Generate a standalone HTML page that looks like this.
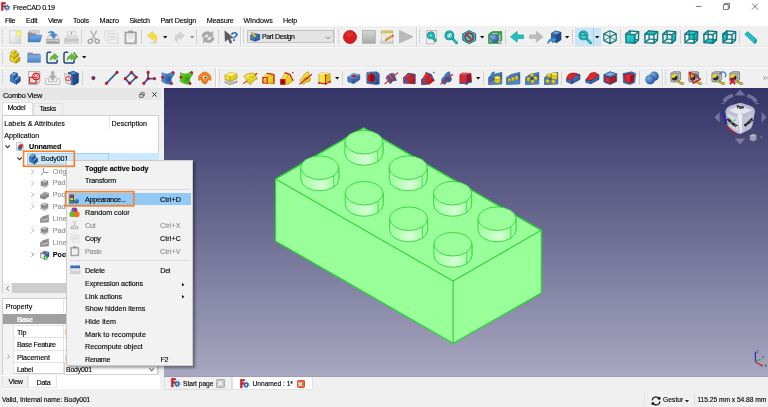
<!DOCTYPE html><html><head><meta charset="utf-8"><title>FreeCAD 0.19</title><style>
*{margin:0;padding:0;box-sizing:border-box}
html,body{width:768px;height:407px;overflow:hidden;background:#f0f0f0}
body{position:relative;will-change:transform;font-family:"Liberation Sans",sans-serif;font-size:7px;color:#000;line-height:1}
.a{position:absolute}
.t{position:absolute;white-space:nowrap;line-height:10px;height:10px;-webkit-text-stroke:.12px currentColor}
.g{color:#8e8e8e}
.b{font-weight:bold}
svg{position:absolute;overflow:visible}
</style></head><body>
<div class="a" style="left:0px;top:0px;width:768px;height:26px;background:#fff"></div>
<svg style="left:1.1px;top:2.4px" width="9.0" height="9.0" viewBox="0 0 9 9"><path d="M.3 .3H4.5V2H2.1V3.4H3.8V5H2.1V8.5H.3Z" fill="#d3222a" stroke="#8a1218" stroke-width=".35"/><circle cx="5.9" cy="5.6" r="2.1" fill="#3a6fb5" stroke="#1c3c70" stroke-width=".4"/><circle cx="5.9" cy="5.6" r="2.7" fill="none" stroke="#2a5596" stroke-width=".9" stroke-dasharray="1 1.12"/><circle cx="5.9" cy="5.6" r=".85" fill="#fff"/></svg>
<div class="t " style="left:12.9px;top:2.90px;font-size:7.2px;letter-spacing:-0.338px;">FreeCAD 0.19</div>
<div class="t " style="left:5px;top:15.80px;font-size:7.2px;letter-spacing:-0.334px;">File</div>
<div class="t " style="left:26px;top:15.80px;font-size:7.2px;letter-spacing:-0.302px;">Edit</div>
<div class="t " style="left:48px;top:15.80px;font-size:7.2px;letter-spacing:-0.325px;">View</div>
<div class="t " style="left:73px;top:15.80px;font-size:7.2px;letter-spacing:-0.202px;">Tools</div>
<div class="t " style="left:99.6px;top:15.80px;font-size:7.2px;letter-spacing:-0.151px;">Macro</div>
<div class="t " style="left:129.6px;top:15.80px;font-size:7.2px;letter-spacing:-0.322px;">Sketch</div>
<div class="t " style="left:160.4px;top:15.80px;font-size:7.2px;letter-spacing:-0.172px;">Part Design</div>
<div class="t " style="left:206.7px;top:15.80px;font-size:7.2px;letter-spacing:-0.152px;">Measure</div>
<div class="t " style="left:243.5px;top:15.80px;font-size:7.2px;letter-spacing:0.049px;">Windows</div>
<div class="t " style="left:283px;top:15.80px;font-size:7.2px;letter-spacing:-0.169px;">Help</div>
<svg style="left:0;top:0" width="768" height="14" viewBox="0 0 768 14"><path d="M695.8 6.4h6" stroke="#444" stroke-width=".7"/><path d="M723.5 4.6h4.8v4.9h-4.8z M724.7 4.6v-1.2h4.8v4.9h-1.2" fill="none" stroke="#444" stroke-width=".7"/><path d="M752 3.4l6 6.2M758 3.4l-6 6.2" stroke="#444" stroke-width=".7"/></svg>
<div class="a" style="left:0px;top:26px;width:768px;height:62px;background:#f0f0f0"></div>
<div class="a" style="left:0px;top:45.6px;width:768px;height:1px;background:#e5e5e5"></div>
<div class="a" style="left:0px;top:46.6px;width:768px;height:0.8px;background:#fcfcfc"></div>
<div class="a" style="left:0px;top:66.2px;width:768px;height:1px;background:#e5e5e5"></div>
<div class="a" style="left:0px;top:67.2px;width:768px;height:0.8px;background:#fcfcfc"></div>
<div class="t " style="left:2px;top:395.40px;font-size:6.7px;letter-spacing:-0.027px;">Valid, Internal name: Body001</div>
<div class="t " style="left:663px;top:395.40px;font-size:6.7px;letter-spacing:0.039px;">Gestur</div>
<div class="t " style="left:697.4px;top:395.40px;font-size:6.7px;letter-spacing:-0.041px;">115.25 mm x 54.88 mm</div>
<div class="a" style="left:694px;top:393px;width:1px;height:14px;background:#dcdcdc"></div>
<div class="a" style="left:644px;top:393px;width:1px;height:14px;background:#e4e4e4"></div>
<svg style="left:650px;top:395px" width="12" height="12" viewBox="0 0 12 12"><path d="M2.2 5.2A3.6 3.6 0 0 1 8.6 3.2" fill="none" stroke="#222" stroke-width="1.3"/><path d="M9.8 6.4A3.6 3.6 0 0 1 3.4 8.6" fill="none" stroke="#222" stroke-width="1.3"/><circle cx="9.1" cy="3.3" r="1.5" fill="#222"/><circle cx="2.9" cy="8.6" r="1.5" fill="#222"/></svg>
<svg style="left:685px;top:399.5px" width="4" height="3" viewBox="0 0 4 3"><path d="M0 0h4l-2 2.4z" fill="#222"/></svg>
<div class="a" style="left:164px;top:376.6px;width:604px;height:14px;background:#f0f0f0"></div>
<div class="a" style="left:164.3px;top:376.6px;width:67.4px;height:13.4px;background:#f0f0f0;border:1px solid #dedede;border-top:none"></div>
<div class="a" style="left:232px;top:376.3px;width:81.4px;height:14px;background:#fff;border:1px solid #e3e3e3;border-top:none"></div>
<svg style="left:170.8px;top:378.4px" width="9.450000000000001" height="9.450000000000001" viewBox="0 0 9 9"><path d="M.3 .3H4.5V2H2.1V3.4H3.8V5H2.1V8.5H.3Z" fill="#d3222a" stroke="#8a1218" stroke-width=".35"/><circle cx="5.9" cy="5.6" r="2.1" fill="#3a6fb5" stroke="#1c3c70" stroke-width=".4"/><circle cx="5.9" cy="5.6" r="2.7" fill="none" stroke="#2a5596" stroke-width=".9" stroke-dasharray="1 1.12"/><circle cx="5.9" cy="5.6" r=".85" fill="#fff"/></svg>
<div class="t " style="left:183px;top:379.10px;font-size:6.7px;letter-spacing:-0.046px;">Start page</div>
<div class="a" style="left:216.3px;top:379px;width:8.3px;height:8.5px;background:#c9c9c9;border:1px solid #b0b0b0;border-radius:1px"></div>
<svg style="left:218.3px;top:381.1px" width="4.4" height="4.4" viewBox="0 0 4 4"><path d="M.3 .3l3.4 3.4M3.7 .3L.3 3.7" stroke="#fff" stroke-width="1"/></svg>
<svg style="left:240px;top:378.8px" width="9.450000000000001" height="9.450000000000001" viewBox="0 0 9 9"><path d="M.3 .3H4.5V2H2.1V3.4H3.8V5H2.1V8.5H.3Z" fill="#d3222a" stroke="#8a1218" stroke-width=".35"/><circle cx="5.9" cy="5.6" r="2.1" fill="#3a6fb5" stroke="#1c3c70" stroke-width=".4"/><circle cx="5.9" cy="5.6" r="2.7" fill="none" stroke="#2a5596" stroke-width=".9" stroke-dasharray="1 1.12"/><circle cx="5.9" cy="5.6" r=".85" fill="#fff"/></svg>
<div class="t " style="left:252.5px;top:379.10px;font-size:6.7px;letter-spacing:-0.042px;">Unnamed : 1*</div>
<div class="a" style="left:296.5px;top:379.5px;width:8.2px;height:8.3px;background:#e66a48;border:1px solid #d4512f;border-radius:1.2px"></div>
<svg style="left:298.4px;top:381.5px" width="4.4" height="4.4" viewBox="0 0 4 4"><path d="M.3 .3l3.4 3.4M3.7 .3L.3 3.7" stroke="#fff" stroke-width="1.1"/></svg>
<div class="a" style="left:164px;top:88px;width:604px;height:288.6px;background:linear-gradient(#333366 0%,#a8a8c1 100%)"></div>
<div class="a" style="left:164px;top:375.8px;width:604px;height:0.8px;background:#9c9cb2"></div>
<svg style="left:0;top:0" width="768" height="407" viewBox="0 0 768 407"><defs><linearGradient id="sd" x1="0" x2="1" y1="0" y2="0"><stop offset="0" stop-color="#9eff9e"/><stop offset=".28" stop-color="#b8ffb8"/><stop offset=".55" stop-color="#d4ffd4"/><stop offset=".8" stop-color="#b0ffb0"/><stop offset="1" stop-color="#99ff99"/></linearGradient></defs><polygon points="363.7,128.0 541.2,230.3 541.2,293.1 453.1,343.3 275.6,241.0 275.6,179.0" fill="#99ff99" stroke="#33d23b" stroke-width="1.15" stroke-linejoin="round"/><polygon points="275.6,179.0 453.1,281.0 453.1,343.3 275.6,241.0" fill="#99ff99" stroke="none"/><polygon points="453.1,281.0 541.2,230.3 541.2,293.1 453.1,343.3" fill="#99ff99" stroke="none"/><path d="M275.6,179.0 L453.1,281.0 L541.2,230.3 M453.1,281.0 L453.1,343.3 M275.6,179.0 L275.6,241.0 L453.1,343.3 L541.2,293.1 L541.2,230.3 L363.7,128.0 L275.6,179.0" fill="none" stroke="#33d23b" stroke-width="1.15" stroke-linejoin="round"/><path d="M344.9,142.2 L344.9,153.5 A19.0,11.8 0 0 0 382.9,153.5 L382.9,142.2 Z" fill="url(#sd)" stroke="#33d23b" stroke-width=".9"/><path d="M377.7,150.3 L377.7,161.6 A19.0,11.8 0 0 0 382.9,153.5 L382.9,142.2 Z" fill="#9bff9b" stroke="#33d23b" stroke-width=".8"/><ellipse cx="363.9" cy="142.2" rx="19.0" ry="11.8" fill="#9aff9a" stroke="#33d23b" stroke-width=".9"/><path d="M300.8,167.7 L300.8,179.0 A19.0,11.8 0 0 0 338.8,179.0 L338.8,167.7 Z" fill="url(#sd)" stroke="#33d23b" stroke-width=".9"/><path d="M333.6,175.8 L333.6,187.1 A19.0,11.8 0 0 0 338.8,179.0 L338.8,167.7 Z" fill="#9bff9b" stroke="#33d23b" stroke-width=".8"/><ellipse cx="319.8" cy="167.7" rx="19.0" ry="11.8" fill="#9aff9a" stroke="#33d23b" stroke-width=".9"/><path d="M389.2,167.7 L389.2,179.0 A19.0,11.8 0 0 0 427.2,179.0 L427.2,167.7 Z" fill="url(#sd)" stroke="#33d23b" stroke-width=".9"/><path d="M422.0,175.8 L422.0,187.1 A19.0,11.8 0 0 0 427.2,179.0 L427.2,167.7 Z" fill="#9bff9b" stroke="#33d23b" stroke-width=".8"/><ellipse cx="408.2" cy="167.7" rx="19.0" ry="11.8" fill="#9aff9a" stroke="#33d23b" stroke-width=".9"/><path d="M345.2,193.2 L345.2,204.5 A19.0,11.8 0 0 0 383.2,204.5 L383.2,193.2 Z" fill="url(#sd)" stroke="#33d23b" stroke-width=".9"/><path d="M378.0,201.3 L378.0,212.6 A19.0,11.8 0 0 0 383.2,204.5 L383.2,193.2 Z" fill="#9bff9b" stroke="#33d23b" stroke-width=".8"/><ellipse cx="364.2" cy="193.2" rx="19.0" ry="11.8" fill="#9aff9a" stroke="#33d23b" stroke-width=".9"/><path d="M433.6,193.2 L433.6,204.5 A19.0,11.8 0 0 0 471.6,204.5 L471.6,193.2 Z" fill="url(#sd)" stroke="#33d23b" stroke-width=".9"/><path d="M466.4,201.3 L466.4,212.6 A19.0,11.8 0 0 0 471.6,204.5 L471.6,193.2 Z" fill="#9bff9b" stroke="#33d23b" stroke-width=".8"/><ellipse cx="452.6" cy="193.2" rx="19.0" ry="11.8" fill="#9aff9a" stroke="#33d23b" stroke-width=".9"/><path d="M389.6,218.7 L389.6,230.0 A19.0,11.8 0 0 0 427.6,230.0 L427.6,218.7 Z" fill="url(#sd)" stroke="#33d23b" stroke-width=".9"/><path d="M422.4,226.8 L422.4,238.1 A19.0,11.8 0 0 0 427.6,230.0 L427.6,218.7 Z" fill="#9bff9b" stroke="#33d23b" stroke-width=".8"/><ellipse cx="408.6" cy="218.7" rx="19.0" ry="11.8" fill="#9aff9a" stroke="#33d23b" stroke-width=".9"/><path d="M478.0,218.7 L478.0,230.0 A19.0,11.8 0 0 0 516.0,230.0 L516.0,218.7 Z" fill="url(#sd)" stroke="#33d23b" stroke-width=".9"/><path d="M510.8,226.8 L510.8,238.1 A19.0,11.8 0 0 0 516.0,230.0 L516.0,218.7 Z" fill="#9bff9b" stroke="#33d23b" stroke-width=".8"/><ellipse cx="497.0" cy="218.7" rx="19.0" ry="11.8" fill="#9aff9a" stroke="#33d23b" stroke-width=".9"/><path d="M433.9,244.2 L433.9,255.5 A19.0,11.8 0 0 0 471.9,255.5 L471.9,244.2 Z" fill="url(#sd)" stroke="#33d23b" stroke-width=".9"/><path d="M466.7,252.3 L466.7,263.6 A19.0,11.8 0 0 0 471.9,255.5 L471.9,244.2 Z" fill="#9bff9b" stroke="#33d23b" stroke-width=".8"/><ellipse cx="452.9" cy="244.2" rx="19.0" ry="11.8" fill="#9aff9a" stroke="#33d23b" stroke-width=".9"/></svg>
<svg style="left:700px;top:86px" width="68" height="62" viewBox="700 86 68 62"><path d="M740 89.6L745.4 95.6H734.6Z" fill="#b9b9d6" fill-opacity=".45"/><path d="M740 144.4L745.2 138.6H734.8Z" fill="#b9b9d6" fill-opacity=".45"/><path d="M714.4 117.2L719.6 112V122.4Z" fill="#b9b9d6" fill-opacity=".45"/><path d="M766.6 117.2L761.6 112V122.4Z" fill="#b9b9d6" fill-opacity=".45"/><path d="M720.4 103.4L724.6 104.4L722.8 99.8C725 96.8 728.6 94.6 732.6 93.8L733.6 96.8C730 97.8 727.4 99.6 725.6 102.4Z" fill="#b9b9d6" fill-opacity=".45"/><path d="M760 103.6L755.4 104.4L757.4 100C755.2 97 751.6 94.8 747.6 94L746.8 97C750.2 98 752.8 99.8 754.6 102.6Z" fill="#b9b9d6" fill-opacity=".45"/><path d="M725.4 111.6C725.6 108.6 728 106.6 731 105.6L738 103.2C739.4 102.8 741 102.8 742.4 103.2L750 105.8C753 106.8 755 108.8 755 111.6L752.6 124.6C752.2 127 750.8 128.8 748.6 130L741.6 133.6C740.4 134.2 739.2 134.2 738 133.6L731.6 130C729.4 128.8 728 127 727.6 124.8Z" fill="#c9c9de" fill-opacity=".9"/><path d="M728.6 110.2L739.4 105.2L752.2 110.2L740 115.6Z" fill="#e4e4f0"/><path d="M727.4 113L738 118V131.2L730 126.2Z" fill="#d5d5e6"/><path d="M742 118L753 113L750.6 126.2L742 131.2Z" fill="#c2c2d8"/><path d="M738 118L740 115.6L742 118V131.6L740 133Z" fill="#e9e9f4"/><circle cx="740" cy="116.6" r="2.4" fill="#ececf6"/><path d="M740 106V116" stroke="#efeff8" stroke-width="1"/><text x="740.1" y="108.6" font-family="Liberation Sans,sans-serif" font-weight="bold" font-size="3.5" text-anchor="middle" fill="#000" stroke="#000" stroke-width=".3" transform="rotate(8 740.1 107.4)">TOP</text><text x="732" y="124.1" font-family="Liberation Sans,sans-serif" font-weight="bold" font-size="3.5" text-anchor="middle" fill="#000" stroke="#000" stroke-width=".3" transform="rotate(40 732 122.9)">FRONT</text><text x="748.7" y="123.6" font-family="Liberation Sans,sans-serif" font-weight="bold" font-size="3.5" text-anchor="middle" fill="#000" stroke="#000" stroke-width=".3" transform="rotate(-40 748.7 122.4)">RIGHT</text><path d="M726.2 125.2L722.4 112" stroke="#1d1dd8" stroke-width="1.1"/><path d="M726.2 125.2L735.4 134" stroke="#c61a2a" stroke-width="1.1"/><path d="M726.2 125.2L736 119.6" stroke="#35d046" stroke-width=".8"/><text x="721.4" y="107.4" font-family="Liberation Sans,sans-serif" font-size="4" fill="#2222e0">Z</text><text x="741" y="139.4" font-family="Liberation Sans,sans-serif" font-size="4" fill="#c61a2a">X</text><text x="741.6" y="116.4" font-family="Liberation Sans,sans-serif" font-size="3.2" fill="#5ae86a">Y</text><path d="M749.8 135.4L752.6 134.2L756.4 135V139.8L753.4 141.2L749.8 140Z" fill="#9d9db4" stroke="#8888a2" stroke-width=".3"/><path d="M749.8 135.4L752.6 134.2L756.4 135L753.4 136.4Z" fill="#b9b9cc"/><path d="M759.4 136.6H763L761.2 138.6Z" fill="#77778f"/></svg>
<svg style="left:745px;top:345px" width="23" height="30" viewBox="745 345 23 30"><path d="M755.4 362V353" stroke="#2a2ac8" stroke-width="1.1"/><path d="M755.4 350.8L756.3 354H754.5Z" fill="#2a2ac8"/><path d="M755.4 362L760 359.4" stroke="#2aa62a" stroke-width="1"/><path d="M761.4 358.6L759.4 360.6L758.8 359.2Z" fill="#2aa62a"/><path d="M755.4 362L762 365.6" stroke="#b8222a" stroke-width="1.1"/><path d="M763.6 366.6L760.8 366.2L761.6 364.6Z" fill="#b8222a"/><text x="756.4" y="353" font-family="Liberation Sans,sans-serif" font-size="3.8" fill="#333">Z</text><text x="762" y="359" font-family="Liberation Sans,sans-serif" font-size="3.8" fill="#333">Y</text><text x="764.4" y="367.4" font-family="Liberation Sans,sans-serif" font-size="3.8" fill="#333">X</text></svg>
<svg width="0" height="0" style="left:0;top:0"><defs><linearGradient id="gpg" x1="0" y1="0" x2="1" y2="1"><stop offset="0" stop-color="#fbfbfb"/><stop offset="1" stop-color="#d4d4d4"/></linearGradient><linearGradient id="gbl" x1="0" y1="0" x2="0" y2="1"><stop offset="0" stop-color="#6aa2de"/><stop offset="1" stop-color="#3a74bd"/></linearGradient><linearGradient id="gbl3" x1="0" y1="0" x2="0" y2="1"><stop offset="0" stop-color="#86b4ea"/><stop offset="1" stop-color="#4c82c8"/></linearGradient><linearGradient id="gbl4" x1="0" y1="0" x2="0" y2="1"><stop offset="0" stop-color="#79ade8"/><stop offset="1" stop-color="#3f7dcc"/></linearGradient><linearGradient id="gbl2" x1="0" y1="0" x2="1" y2="1"><stop offset="0" stop-color="#5d97d6"/><stop offset="1" stop-color="#1f4f92"/></linearGradient><linearGradient id="gye" x1="0" y1="0" x2="1" y2="1"><stop offset="0" stop-color="#fff25a"/><stop offset="1" stop-color="#d8b90a"/></linearGradient><linearGradient id="grd" x1="0" y1="0" x2="1" y2="1"><stop offset="0" stop-color="#f03a3a"/><stop offset="1" stop-color="#b80c0c"/></linearGradient><linearGradient id="ggy" x1="0" y1="0" x2="0" y2="1"><stop offset="0" stop-color="#d6d6d6"/><stop offset="1" stop-color="#a9a9a9"/></linearGradient><linearGradient id="gtl" x1="0" y1="0" x2="1" y2="1"><stop offset="0" stop-color="#35dcdc"/><stop offset="1" stop-color="#12a7ad"/></linearGradient><radialGradient id="gyl"><stop offset="0" stop-color="#fffef0"/><stop offset=".5" stop-color="#f6ee5a"/><stop offset="1" stop-color="#f0e85a" stop-opacity=".0"/></radialGradient><radialGradient id="gsp" cx=".35" cy=".35" r=".7"><stop offset="0" stop-color="#7fb0e6"/><stop offset="1" stop-color="#1f4f9a"/></radialGradient></defs></svg>
<svg style="left:2.0px;top:29px" width="1" height="15" viewBox="0 0 1 15"><path d="M.5 0V15" stroke="#b9b9b9" stroke-width="1" stroke-dasharray="1 1.2"/></svg>
<svg style="left:9px;top:30px" width="14" height="14" viewBox="0 0 14 14"><path d="M.8 .8H11.6V13.2H.8Z" fill="url(#gpg)" stroke="#c2c2c2" stroke-width=".7"/><circle cx="10" cy="3.4" r="3.6" fill="url(#gyl)"/><circle cx="10" cy="3.4" r="1.9" fill="#f7f06a"/><circle cx="10" cy="3.4" r=".9" fill="#fffbd0"/></svg>
<svg style="left:26.5px;top:30px" width="16" height="13" viewBox="0 0 16 13"><path d="M1.6 1.4H9.4V10H1.6Z" fill="#8f8f8f"/><path d="M2.8 .6H12V9H2.8Z" fill="#dcdcdc" stroke="#a2a2a2" stroke-width=".5"/><path d="M4 2.4H10.6M4 3.8H10.6" stroke="#bdbdbd" stroke-width=".5"/><path d="M.8 2.6H4.6L5.6 3.6H9V11.5H.8Z" fill="#8a8e94"/><path d="M3.2 5.2H15L13 11.9H1Z" fill="url(#gbl4)" stroke="#3d74bb" stroke-width=".5"/></svg>
<svg style="left:45.5px;top:30px" width="14" height="14" viewBox="0 0 14 14"><path d="M2.6 5.2H11.2L13.3 9.4H.5Z" fill="#e6e6e6" stroke="#a6a6a6" stroke-width=".5"/><path d="M.5 9.4H13.3V13.5H.5Z" fill="url(#ggy)" stroke="#8f8f8f" stroke-width=".5"/><path d="M1.4 12H12.4" stroke="#7d7d7d" stroke-width=".7"/><path d="M10 10.6H11.6" stroke="#e8e8e8" stroke-width=".7"/><path d="M2 2.8C3.8 .4 8.4 .4 9 4.4L10.9 4.4L7.6 8.8L4.2 4.4L6.1 4.4C5.8 2.6 3.8 2.2 2 2.8Z" fill="#4a8fdc" stroke="#2a66ae" stroke-width=".45"/></svg>
<svg style="left:63.5px;top:30px" width="15" height="14" viewBox="0 0 15 14"><path d="M3.6 1.4H11.4V6.4H3.6Z" fill="#f4f4f4" stroke="#bdbdbd" stroke-width=".6"/><path d="M7.5 2.2V5M6.1 3.6L7.5 2.2L8.9 3.6" stroke="#ababab" stroke-width=".9" fill="none"/><path d="M2.4 6H12.6L14.3 9.2H.7Z" fill="#e2e2e2" stroke="#b5b5b5" stroke-width=".5"/><path d="M.7 9.2H14.3V13.2H.7Z" fill="#d2d2d2" stroke="#b0b0b0" stroke-width=".5"/><path d="M1.6 11.2H13.4" stroke="#a9a9a9" stroke-width=".7"/><path d="M1.6 12.2H13.4" stroke="#f4f4f4" stroke-width=".6"/></svg>
<div class="a" style="left:81.0px;top:30px;width:1px;height:14px;background:#cfcfcf"></div>
<svg style="left:87px;top:30px" width="13.5" height="14.5" viewBox="0 0 13.5 14.5"><path d="M3.6 .6L8.6 9.6M9.8 .6L4.8 9.6" stroke="#b9b9b9" stroke-width="1.5" fill="none"/><ellipse cx="3.3" cy="11.3" rx="2.3" ry="1.9" transform="rotate(-35 3.3 11.3)" fill="none" stroke="#9c9c9c" stroke-width="1.2"/><ellipse cx="10.1" cy="11.3" rx="2.3" ry="1.9" transform="rotate(35 10.1 11.3)" fill="none" stroke="#9c9c9c" stroke-width="1.2"/></svg>
<svg style="left:104px;top:30px" width="15" height="14.5" viewBox="0 0 15 14.5"><path d="M.8 .8H9.2V10.4H.8Z" fill="#ececec" stroke="#d3d3d3" stroke-width=".6"/><path d="M4.6 3.6H14V13.6H4.6Z" fill="#eeeeee" stroke="#cfcfcf" stroke-width=".6"/><path d="M6.4 6.2H12M6.4 7.8H12M6.4 9.4H10.5" stroke="#d2d2d2" stroke-width=".8"/><path d="M11.4 13.6L14 11V13.6Z" fill="#d0d0d0"/></svg>
<svg style="left:124px;top:29.6px" width="13.5" height="14.5" viewBox="0 0 13.5 14.5"><path d="M.9 2H12.4V13.8H.9Z" fill="#a9a9a9" stroke="#979797" stroke-width=".6"/><path d="M2.4 3.4H10.9V12.4H2.4Z" fill="#f0f0f0"/><path d="M4.2 .7H9.1V3H4.2Z" fill="#9a9a9a"/><path d="M4 5.4H9.4M4 7H9.4M4 8.6H8" stroke="#d6d6d6" stroke-width=".7"/><path d="M8.6 12.4L10.9 10.2V12.4Z" fill="#c4c4c4"/></svg>
<div class="a" style="left:140.8px;top:30px;width:1px;height:14px;background:#cfcfcf"></div>
<svg style="left:146.5px;top:30.5px" width="12" height="13" viewBox="0 0 12 13"><ellipse cx="6.8" cy="11.6" rx="3.6" ry=".9" fill="#d2d2d2"/><path d="M.6 4.6L5.6 .6V3C10.6 3 11.6 8.6 7 11.4C8.6 8.6 8 6.4 5.6 6.4V8.8Z" fill="#f5e332" stroke="#d8bb12" stroke-width=".5"/></svg>
<svg style="left:163.4px;top:35.8px" width="4.4" height="2.6" viewBox="0 0 4.4 2.6"><path d="M0 0H4.4L2.2 2.6Z" fill="#111"/></svg>
<svg style="left:173.2px;top:30.5px" width="12" height="13" viewBox="0 0 12 13"><path d="M11.4 4.6L6.4 .6V3C1.4 3 .4 8.6 5 11.4C3.4 8.6 4 6.4 6.4 6.4V8.8Z" fill="#d2d2d2" stroke="#c4c4c4" stroke-width=".5"/></svg>
<svg style="left:189.8px;top:35.8px" width="4.4" height="2.6" viewBox="0 0 4.4 2.6"><path d="M0 0H4.4L2.2 2.6Z" fill="#8c8c8c"/></svg>
<div class="a" style="left:196.0px;top:30px;width:1px;height:14px;background:#cfcfcf"></div>
<svg style="left:201.4px;top:29.8px" width="14" height="14.4" viewBox="0 0 14 14.4"><path d="M.8 6.8C.6 2.2 6.6 -.2 10 3L11.8 1.2V6.8H6.2L8 5C6.4 3.4 3.8 4.2 3.6 6.8Z" fill="#a9a9a9" stroke="#989898" stroke-width=".3"/><path d="M13.2 7.6C13.4 12.2 7.4 14.6 4 11.4L2.2 13.2V7.6H7.8L6 9.4C7.6 11 10.2 10.2 10.4 7.6Z" fill="#a9a9a9" stroke="#989898" stroke-width=".3"/></svg>
<div class="a" style="left:218.0px;top:30px;width:1px;height:14px;background:#cfcfcf"></div>
<svg style="left:223.5px;top:30px" width="14" height="14" viewBox="0 0 14 14"><path d="M.8 .8L1.2 11.6L4 9L6.2 13.4L8 12.5L5.9 8.2L9.6 8Z" fill="#5a5d5f" stroke="#3e4143" stroke-width=".4"/><text x="6.2" y="10.6" font-family="Liberation Sans,sans-serif" font-weight="bold" font-size="13.5" fill="#2f6cc0">?</text></svg>
<div class="a" style="left:239.5px;top:27px;width:1px;height:19px;background:#d4d4d4"></div>
<div class="a" style="left:240.5px;top:27px;width:1px;height:19px;background:#fbfbfb"></div>
<svg style="left:243.0px;top:29px" width="1" height="15" viewBox="0 0 1 15"><path d="M.5 0V15" stroke="#b9b9b9" stroke-width="1" stroke-dasharray="1 1.2"/></svg>
<div class="a" style="left:247px;top:30.4px;width:86.6px;height:12.6px;background:#e4e4e4;border:1px solid #c2c2c2"></div>
<svg style="left:250px;top:32px" width="10.5" height="9.5" viewBox="0 0 10.5 9.5"><path d="M.5 3.2L4.4 1.6L9.8 2.6V7.6L5.4 9.2L.5 7.8Z" fill="url(#gbl2)" stroke="#143a72" stroke-width=".5"/><path d="M.5 3.2L5.4 4.4L9.8 2.6M5.4 4.4V9.2" stroke="#143a72" stroke-width=".4" fill="none"/><path d="M1.2 .4L2.6 0L6.2 4.2L5.4 5.2L4 5Z" fill="#f1d63a" stroke="#8a6d10" stroke-width=".4"/></svg>
<div class="t " style="left:262px;top:32.00px;font-size:7.0px;letter-spacing:-0.357px;">Part Design</div>
<svg style="left:325px;top:35.6px" width="6" height="4" viewBox="0 0 6 4"><path d="M.6 .6L3 3L5.4 .6" fill="none" stroke="#666" stroke-width=".7"/></svg>
<div class="a" style="left:334.0px;top:27px;width:1px;height:19px;background:#d4d4d4"></div>
<div class="a" style="left:335.0px;top:27px;width:1px;height:19px;background:#fbfbfb"></div>
<svg style="left:337.5px;top:29px" width="1" height="15" viewBox="0 0 1 15"><path d="M.5 0V15" stroke="#b9b9b9" stroke-width="1" stroke-dasharray="1 1.2"/></svg>
<svg style="left:343px;top:30px" width="14" height="14" viewBox="0 0 14 14"><circle cx="7" cy="7" r="6.5" fill="#d91c1c" stroke="#a30f0f" stroke-width=".7"/><ellipse cx="6" cy="4.6" rx="3.6" ry="2.4" fill="#e94040" opacity=".55"/></svg>
<svg style="left:362px;top:30.2px" width="14" height="14" viewBox="0 0 14 14"><path d="M.5 .5H13.3V13.3H.5Z" fill="url(#ggy)" stroke="#a2a2a2" stroke-width=".7"/></svg>
<svg style="left:380px;top:30px" width="15" height="14" viewBox="0 0 15 14"><path d="M1.4 1H12.6V12.6H1.4Z" fill="#f3f3f0" stroke="#b4b4ae" stroke-width=".6"/><path d="M.8 11.2H13.2V13.4H.8Z" fill="#d8d8d2" stroke="#aaa" stroke-width=".4"/><path d="M1.4 1H12.6V3H1.4Z" fill="#e5cf5a" stroke="#b99f2d" stroke-width=".5"/><path d="M3 5H8M3 6.6H7M3 8.2H6" stroke="#cfcfcf" stroke-width=".6"/><path d="M5 10.6L6 8.6L12.2 5L13.4 6.6L7.2 10.2Z" fill="#e8a23c" stroke="#9b6414" stroke-width=".4"/><path d="M12.2 5L13 4.5L14.2 6.1L13.4 6.6Z" fill="#e13b2d"/><path d="M5 10.6L5.4 9.8L6 10.3Z" fill="#333"/></svg>
<svg style="left:399px;top:30.3px" width="14.5" height="13.6" viewBox="0 0 14.5 13.6"><path d="M.5 .5L14 6.8L.5 13.1Z" fill="#b9b9b9" stroke="#a8a8a8" stroke-width=".6"/></svg>
<div class="a" style="left:415.5px;top:27px;width:1px;height:19px;background:#d4d4d4"></div>
<div class="a" style="left:416.5px;top:27px;width:1px;height:19px;background:#fbfbfb"></div>
<svg style="left:419.0px;top:29px" width="1" height="15" viewBox="0 0 1 15"><path d="M.5 0V15" stroke="#b9b9b9" stroke-width="1" stroke-dasharray="1 1.2"/></svg>
<svg style="left:426px;top:30px" width="12" height="14.5" viewBox="0 0 12 14.5"><path d="M.6 .6H10.6V11L8 13.8H.6Z" fill="#f2f2f2" stroke="#a9a9a9" stroke-width=".7"/><path d="M8 13.8V11H10.6" fill="#d5d5d5" stroke="#a9a9a9" stroke-width=".5"/><path d="M6.9 7.4L9.2 10.4" stroke="#0b7478" stroke-width="2.6" stroke-linecap="round"/><path d="M6.9 7.4L9.2 10.4" stroke="#22c9cd" stroke-width="1.5" stroke-linecap="round"/><circle cx="4.9" cy="5.4" r="2.9" fill="#4fd6da" stroke="#0b7478" stroke-width="2.1"/><circle cx="4.9" cy="5.4" r="2.9" fill="none" stroke="#1fc3c8" stroke-width="1.2"/></svg>
<svg style="left:443.5px;top:30px" width="14.5" height="14.5" viewBox="0 0 14.5 14.5"><path d="M8.1 8.1L12.6 12.8" stroke="#0b7478" stroke-width="2.6" stroke-linecap="round"/><path d="M8.1 8.1L12.6 12.8" stroke="#22c9cd" stroke-width="1.5" stroke-linecap="round"/><circle cx="5.4" cy="5.4" r="3.9" fill="#4fd6da" stroke="#0b7478" stroke-width="2.1"/><circle cx="5.4" cy="5.4" r="3.9" fill="none" stroke="#1fc3c8" stroke-width="1.2"/><path d="M4 6.8L6.8 4" stroke="#fff" stroke-width="1.2" stroke-linecap="round"/></svg>
<svg style="left:462px;top:30px" width="14.5" height="14.5" viewBox="0 0 14.5 14.5"><path d="M7.2 .6L13.6 3.9V10.3L7.2 13.7L.8 10.3V3.9Z" fill="#22c4c8" stroke="#0b7478" stroke-width="1"/><circle cx="7.2" cy="7.2" r="4" fill="#35d3d6" stroke="#c9161b" stroke-width="1.5"/><path d="M4.5 4.6L9.9 9.8" stroke="#c9161b" stroke-width="1.5"/></svg>
<svg style="left:479.7px;top:35.8px" width="4.4" height="2.6" viewBox="0 0 4.4 2.6"><path d="M0 0H4.4L2.2 2.6Z" fill="#111"/></svg>
<svg style="left:487.6px;top:31px" width="15" height="13.4" viewBox="0 0 15 13.4"><path d="M1 3.6L4.6 .9H13.4V9L9.8 12H1Z" fill="#8d9aa8" fill-opacity=".55" stroke="#178a2a" stroke-width="1.5" stroke-linejoin="round"/><path d="M1 3.6H9.8V12M9.8 3.6L13.4 .9" fill="none" stroke="#178a2a" stroke-width="1.4"/><path d="M1 3.6L4.6 .9H13.4V9L9.8 12H1Z M1 3.6H9.8V12M9.8 3.6L13.4 .9" fill="none" stroke="#3fc14e" stroke-width=".5"/><circle cx="6.4" cy="7.2" r="4.3" fill="url(#gsp)"/><path d="M9.6 7.6L13.8 12.4L12.2 12.2L11.4 13.4Z" fill="#ececec" stroke="#555" stroke-width=".4"/></svg>
<div class="a" style="left:504.9px;top:30px;width:1px;height:14px;background:#cfcfcf"></div>
<svg style="left:510px;top:31px" width="14" height="12" viewBox="0 0 14 12"><path d="M.5 5.8L7.2 .4V4H13.5V7.6H7.2V11.2Z" fill="#1fc1c6" stroke="#0e8b90" stroke-width=".6"/></svg>
<svg style="left:528.5px;top:31px" width="14.5" height="12" viewBox="0 0 14.5 12"><path d="M14 5.8L7.3 .4V4H.6V7.6H7.3V11.2Z" fill="#bdbdbd" stroke="#adadad" stroke-width=".6"/></svg>
<svg style="left:547px;top:30px" width="14.5" height="14.5" viewBox="0 0 14.5 14.5"><path d="M4.4 3.4L8.4 1L13.8 2.4V9.8L9.6 12.6L4.4 11Z" fill="#2f64ac" stroke="#13315f" stroke-width=".6" stroke-linejoin="round"/><path d="M4.4 3.4L8.4 1L13.8 2.4L9.6 5Z" fill="#6da3df" stroke="#13315f" stroke-width=".4"/><path d="M9.6 5L13.8 2.4V9.8L9.6 12.6Z" fill="#1f4c94" stroke="#13315f" stroke-width=".4"/><path d="M.8 13.8C.6 10.6 2.8 8.6 5.6 8.6V6.6L9.4 9.8L5.6 12.8V10.9C3.6 10.8 1.8 11.8 .8 13.8Z" fill="#3fa0d8" stroke="#1b5a94" stroke-width=".5" stroke-linejoin="round"/></svg>
<svg style="left:565.0999999999999px;top:35.8px" width="4.4" height="2.6" viewBox="0 0 4.4 2.6"><path d="M0 0H4.4L2.2 2.6Z" fill="#111"/></svg>
<div class="a" style="left:571.8px;top:30px;width:1px;height:14px;background:#cfcfcf"></div>
<div class="a" style="left:575px;top:28px;width:26.3px;height:17.6px;background:#cce4f7"></div>
<div class="a" style="left:593.2px;top:28px;width:0.8px;height:17.6px;background:#a9cdec"></div>
<svg style="left:578px;top:30px" width="14.5" height="14.5" viewBox="0 0 14.5 14.5"><path d="M8.1 8.1L12.6 12.8" stroke="#0b7478" stroke-width="2.6" stroke-linecap="round"/><path d="M8.1 8.1L12.6 12.8" stroke="#22c9cd" stroke-width="1.5" stroke-linecap="round"/><circle cx="5.4" cy="5.4" r="3.9" fill="#4fd6da" stroke="#0b7478" stroke-width="2.1"/><circle cx="5.4" cy="5.4" r="3.9" fill="none" stroke="#1fc3c8" stroke-width="1.2"/><path d="M3.2 5.4H7.6M5.6 3.6C7 3.8 7.4 5 7 6.4" stroke="#0b7478" stroke-width=".9" fill="none"/></svg>
<svg style="left:595.0px;top:35.8px" width="4.4" height="2.6" viewBox="0 0 4.4 2.6"><path d="M0 0H4.4L2.2 2.6Z" fill="#111"/></svg>
<svg style="left:602.8px;top:30px" width="14" height="14.5" viewBox="0 0 14 14.5"><path d="M7 .8L13.2 3.8V10.4L7 13.6L.8 10.4V3.8Z M.8 3.8L7 6.8L13.2 3.8M7 6.8V13.6" fill="none" stroke="#0d767b" stroke-width="1.25" stroke-linejoin="round"/><path d="M7 .8V7.2L.8 10.4M7 7.2L13.2 10.4" fill="none" stroke="#0d767b" stroke-width=".9" stroke-opacity=".8"/></svg>
<div class="a" style="left:619.9px;top:30px;width:1px;height:14px;background:#cfcfcf"></div>
<svg style="left:625px;top:30px" width="14.5" height="14.5" viewBox="0 0 14.5 14.5"><path d="M5 .9L5.2 8.9L13.4 9.9M5.2 8.9L1.1 12.6" stroke="#0e7a7f" stroke-width="1.45" stroke-linejoin="round" stroke-linecap="round" fill="none" stroke-opacity=".95"/><path d="M.8 4.1L10 4.8L10 13.3L1.1 12.6Z" fill="url(#gtl)"/><path d="M.8 4.1L10 4.8L10 13.3L1.1 12.6Z M.8 4.1L5 .9L13.7 1.8L10 4.8 M13.7 1.8L13.4 9.9L10 13.3" stroke="#0e7a7f" stroke-width="1.45" stroke-linejoin="round" stroke-linecap="round" fill="none"/></svg>
<svg style="left:643.5px;top:30px" width="14.5" height="14.5" viewBox="0 0 14.5 14.5"><path d="M5 .9L5.2 8.9L13.4 9.9M5.2 8.9L1.1 12.6" stroke="#0e7a7f" stroke-width="1.45" stroke-linejoin="round" stroke-linecap="round" fill="none" stroke-opacity=".95"/><path d="M.8 4.1L5 .9L13.7 1.8L10 4.8Z" fill="url(#gtl)"/><path d="M.8 4.1L10 4.8L10 13.3L1.1 12.6Z M.8 4.1L5 .9L13.7 1.8L10 4.8 M13.7 1.8L13.4 9.9L10 13.3" stroke="#0e7a7f" stroke-width="1.45" stroke-linejoin="round" stroke-linecap="round" fill="none"/></svg>
<svg style="left:662px;top:30px" width="14.5" height="14.5" viewBox="0 0 14.5 14.5"><path d="M5 .9L5.2 8.9L13.4 9.9M5.2 8.9L1.1 12.6" stroke="#0e7a7f" stroke-width="1.45" stroke-linejoin="round" stroke-linecap="round" fill="none" stroke-opacity=".95"/><path d="M10 4.8L13.7 1.8L13.4 9.9L10 13.3Z" fill="url(#gtl)"/><path d="M.8 4.1L10 4.8L10 13.3L1.1 12.6Z M.8 4.1L5 .9L13.7 1.8L10 4.8 M13.7 1.8L13.4 9.9L10 13.3" stroke="#0e7a7f" stroke-width="1.45" stroke-linejoin="round" stroke-linecap="round" fill="none"/></svg>
<div class="a" style="left:680.1px;top:30px;width:1px;height:14px;background:#cfcfcf"></div>
<svg style="left:684px;top:30px" width="14.5" height="14.5" viewBox="0 0 14.5 14.5"><path d="M5 .9L13.7 1.8L13.4 9.9L5.2 8.9Z" fill="url(#gtl)"/><path d="M5 .9L5.2 8.9L13.4 9.9M5.2 8.9L1.1 12.6" stroke="#0e7a7f" stroke-width="1.45" stroke-linejoin="round" stroke-linecap="round" fill="none" stroke-opacity=".95"/><path d="M.8 4.1L10 4.8L10 13.3L1.1 12.6Z M.8 4.1L5 .9L13.7 1.8L10 4.8 M13.7 1.8L13.4 9.9L10 13.3" stroke="#0e7a7f" stroke-width="1.45" stroke-linejoin="round" stroke-linecap="round" fill="none"/></svg>
<svg style="left:702.8px;top:30px" width="14.5" height="14.5" viewBox="0 0 14.5 14.5"><path d="M1.1 12.6L5.2 8.9L13.4 9.9L10 13.3Z" fill="url(#gtl)"/><path d="M5 .9L5.2 8.9L13.4 9.9M5.2 8.9L1.1 12.6" stroke="#0e7a7f" stroke-width="1.45" stroke-linejoin="round" stroke-linecap="round" fill="none" stroke-opacity=".95"/><path d="M.8 4.1L10 4.8L10 13.3L1.1 12.6Z M.8 4.1L5 .9L13.7 1.8L10 4.8 M13.7 1.8L13.4 9.9L10 13.3" stroke="#0e7a7f" stroke-width="1.45" stroke-linejoin="round" stroke-linecap="round" fill="none"/></svg>
<svg style="left:721.6px;top:30px" width="14.5" height="14.5" viewBox="0 0 14.5 14.5"><path d="M.8 4.1L5 .9L5.2 8.9L1.1 12.6Z" fill="url(#gtl)"/><path d="M5 .9L5.2 8.9L13.4 9.9M5.2 8.9L1.1 12.6" stroke="#0e7a7f" stroke-width="1.45" stroke-linejoin="round" stroke-linecap="round" fill="none" stroke-opacity=".95"/><path d="M.8 4.1L10 4.8L10 13.3L1.1 12.6Z M.8 4.1L5 .9L13.7 1.8L10 4.8 M13.7 1.8L13.4 9.9L10 13.3" stroke="#0e7a7f" stroke-width="1.45" stroke-linejoin="round" stroke-linecap="round" fill="none"/></svg>
<div class="a" style="left:739.1px;top:30px;width:1px;height:14px;background:#cfcfcf"></div>
<svg style="left:744px;top:30.5px" width="13" height="13.5" viewBox="0 0 13 13.5"><path d="M3.6 .6L12.4 8.2V11.2L10.6 12.8L.8 3.4Z" fill="#22c6ca" stroke="#0e8b90" stroke-width=".6"/><path d="M10.6 12.8L12.4 11.2V8.2L10.6 9.6Z" fill="#0f9499"/><path d="M3.2 3L4.4 2M5 4.6L6.2 3.6M6.8 6.2L8 5.2M8.6 7.8L9.8 6.8" stroke="#0b6d72" stroke-width=".5"/></svg>
<svg style="left:2.0px;top:49.5px" width="1" height="14.5" viewBox="0 0 1 14.5"><path d="M.5 0V14.5" stroke="#b9b9b9" stroke-width="1" stroke-dasharray="1 1.2"/></svg>
<svg style="left:9.2px;top:50.4px" width="12" height="13.6" viewBox="0 0 12 13.6"><g transform="translate(.6 3.4) scale(1 .8)"><path d="M.4 3.3L3.8 .4L7.3 1.4V4.4L10.2 5.2V9.2L6.3 12.2L.4 9.2Z" fill="#f0d820" stroke="#7d6903" stroke-width="0.5" stroke-linejoin="round"/><path d="M.4 3.3L3.8 .4L7.3 1.4L4 4.3Z" fill="#fff46a" stroke="#7d6903" stroke-width="0.35" stroke-linejoin="round"/><path d="M4 7.4L7.3 4.4L10.2 5.2L6.3 8.4Z" fill="#fff46a" stroke="#7d6903" stroke-width="0.35" stroke-linejoin="round"/><path d="M6.3 8.4L10.2 5.2V9.2L6.3 12.2Z" fill="#c9ac08" stroke="#7d6903" stroke-width="0.35" stroke-linejoin="round"/><path d="M4 4.3L7.3 1.4V4.4L4 7.4Z" fill="#c9ac08" stroke="#7d6903" stroke-width="0.35" stroke-linejoin="round"/></g><g transform="translate(1.4 0) scale(.8 .62)"><path d="M.4 3.3L3.8 .4L7.3 1.4V4.4L10.2 5.2V9.2L6.3 12.2L.4 9.2Z" fill="#f0d820" stroke="#7d6903" stroke-width="0.5" stroke-linejoin="round"/><path d="M.4 3.3L3.8 .4L7.3 1.4L4 4.3Z" fill="#fff46a" stroke="#7d6903" stroke-width="0.35" stroke-linejoin="round"/><path d="M4 7.4L7.3 4.4L10.2 5.2L6.3 8.4Z" fill="#fff46a" stroke="#7d6903" stroke-width="0.35" stroke-linejoin="round"/><path d="M6.3 8.4L10.2 5.2V9.2L6.3 12.2Z" fill="#c9ac08" stroke="#7d6903" stroke-width="0.35" stroke-linejoin="round"/><path d="M4 4.3L7.3 1.4V4.4L4 7.4Z" fill="#c9ac08" stroke="#7d6903" stroke-width="0.35" stroke-linejoin="round"/></g></svg>
<svg style="left:26.5px;top:52px" width="14" height="11" viewBox="0 0 14 11"><path d="M.6 .4H5.2L6.4 1.8H12.8V3.4H.6Z" fill="#8b9097"/><path d="M.6 2.8H13.4V10.4H.6Z" fill="url(#gbl3)" stroke="#4d7fbe" stroke-width=".5"/></svg>
<svg style="left:45.5px;top:50.8px" width="15" height="13" viewBox="0 0 15 13"><path d="M5.2 1.2H2.8Q1 1.2 1 3V10.2Q1 12 2.8 12H9.4Q11.2 12 11.2 10.2V8.6" fill="none" stroke="#1f4e80" stroke-width="1.5"/><path d="M4.2 9.4C4 6 6 4.2 8.2 4.4V2.4L12.2 5.8L8.2 9V7C6.6 6.8 5.2 7.6 4.2 9.4Z" fill="#5fc22c" stroke="#2f7d0f" stroke-width=".5"/></svg>
<svg style="left:63.2px;top:50.8px" width="15" height="13" viewBox="0 0 15 13"><path d="M5.2 1.2H2.8Q1 1.2 1 3V10.2Q1 12 2.8 12H9.4Q11.2 12 11.2 10.2V8.6" fill="none" stroke="#1f4e80" stroke-width="1.5"/><path d="M4.2 9.4C4 6 6 4.2 8.2 4.4V2.4L12.2 5.8L8.2 9V7C6.6 6.8 5.2 7.6 4.2 9.4Z" fill="#5fc22c" stroke="#2f7d0f" stroke-width=".5"/><path d="M10.6 1.6L14 5.6L10.8 8.8" fill="none" stroke="#2f7d0f" stroke-width="1.6"/><path d="M10.6 1.6L14 5.6L10.8 8.8" fill="none" stroke="#6bd034" stroke-width=".8"/></svg>
<svg style="left:81.6px;top:56.199999999999996px" width="4.4" height="2.6" viewBox="0 0 4.4 2.6"><path d="M0 0H4.4L2.2 2.6Z" fill="#111"/></svg>
<svg style="left:2.0px;top:69.5px" width="1" height="15.0" viewBox="0 0 1 15.0"><path d="M.5 0V15.0" stroke="#b9b9b9" stroke-width="1" stroke-dasharray="1 1.2"/></svg>
<svg style="left:10px;top:71.7px" width="11" height="12.6" viewBox="0 0 11 12.6"><path d="M.4 3.3L3.8 .4L7.3 1.4V4.4L10.2 5.2V9.2L6.3 12.2L.4 9.2Z" fill="#3f7ac4" stroke="#153b72" stroke-width="0.5" stroke-linejoin="round"/><path d="M.4 3.3L3.8 .4L7.3 1.4L4 4.3Z" fill="#74a8e4" stroke="#153b72" stroke-width="0.35" stroke-linejoin="round"/><path d="M4 7.4L7.3 4.4L10.2 5.2L6.3 8.4Z" fill="#74a8e4" stroke="#153b72" stroke-width="0.35" stroke-linejoin="round"/><path d="M6.3 8.4L10.2 5.2V9.2L6.3 12.2Z" fill="#27569c" stroke="#153b72" stroke-width="0.35" stroke-linejoin="round"/><path d="M4 4.3L7.3 1.4V4.4L4 7.4Z" fill="#27569c" stroke="#153b72" stroke-width="0.35" stroke-linejoin="round"/></svg>
<svg style="left:27.6px;top:70.8px" width="12.6" height="14" viewBox="0 0 12.6 14"><path d="M.6 .6H11.8V10.8L9.2 13.6H.6Z" fill="#f2f2f2" stroke="#9c9c9c" stroke-width=".8"/><path d="M9.2 13.6V10.8H11.8" fill="#c9c9c9" stroke="#9c9c9c" stroke-width=".5"/><path d="M1.7 6.4H8.1V12.1H1.7Z" fill="none" stroke="#dc1e22" stroke-width="1.15"/><circle cx="8.1" cy="5.4" r="3.3" fill="none" stroke="#dc1e22" stroke-width="1.15"/><path d="M6.4 5.2A1.7 1.7 0 1 1 8.1 7" fill="none" stroke="#dc1e22" stroke-width=".7"/></svg>
<svg style="left:45px;top:70.8px" width="15.4" height="14" viewBox="0 0 15.4 14"><path d="M6.3 .4H9.1V5H11.4L7.7 9.7L4 5H6.3Z" fill="#b0b0b0" stroke="#9c9c9c" stroke-width=".4"/><path d="M3.6 7.6H1.2Q.6 7.6 .6 8.2V13Q.6 13.5 1.2 13.5H14.2Q14.8 13.5 14.8 13V8.2Q14.8 7.6 14.2 7.6H11.8V10.9H3.6Z" fill="#f6f6f6" stroke="#adadad" stroke-width=".8" stroke-linejoin="round"/></svg>
<svg style="left:63.8px;top:70.8px" width="14.6" height="14.4" viewBox="0 0 14.6 14.4"><path d="M4.4 1.8L9.6 .4L14.2 2.6V11.6L9.8 14L4.4 12.6Z" fill="#2f64ac" stroke="#123a73" stroke-width=".55" stroke-linejoin="round"/><path d="M4.4 1.8L9.6 .4L14.2 2.6L9.4 4Z" fill="#5b92d6" stroke="#123a73" stroke-width=".55" stroke-linejoin="round"/><path d="M9.4 4L14.2 2.6V11.6L9.8 14Z" fill="#1f4c94" stroke="#123a73" stroke-width=".55" stroke-linejoin="round"/><path d="M.5 2.6L7 3.6V13.2L2 12.2Z" fill="#f4f4f4" stroke="#8c8c8c" stroke-width=".6"/><circle cx="4.2" cy="7.6" r="2.4" fill="none" stroke="#dc1e22" stroke-width="1"/><path d="M4.2 6.4V7.8L5.2 8.6" fill="none" stroke="#dc1e22" stroke-width=".6"/></svg>
<div class="a" style="left:81.5px;top:71px;width:1px;height:14px;background:#cfcfcf"></div>
<svg style="left:0;top:0" width="768" height="100" viewBox="0 0 768 100"><circle cx="93.4" cy="78.1" r="2.1" fill="#3465a4"/><circle cx="93.4" cy="78.1" r="1.25" fill="#d6151c" stroke="#8a0a0e" stroke-width=".35"/><path d="M106.4 83.4L117 72.4" stroke="#345f9e" stroke-width="1.75"/><circle cx="106.4" cy="83.4" r="1.35" fill="#d6151c" stroke="#8a0a0e" stroke-width=".35"/><circle cx="117" cy="72.4" r="1.35" fill="#d6151c" stroke="#8a0a0e" stroke-width=".35"/><path d="M131.5 72.4L136.2 77.3L129.7 83.4L125.3 78.7Z" fill="none" stroke="#345f9e" stroke-width="1.75"/><circle cx="131.5" cy="72.4" r="1.35" fill="#d6151c" stroke="#8a0a0e" stroke-width=".35"/><circle cx="136.2" cy="77.3" r="1.35" fill="#d6151c" stroke="#8a0a0e" stroke-width=".35"/><circle cx="129.7" cy="83.4" r="1.35" fill="#d6151c" stroke="#8a0a0e" stroke-width=".35"/><circle cx="125.3" cy="78.7" r="1.35" fill="#d6151c" stroke="#8a0a0e" stroke-width=".35"/><path d="M148.1 72.4V78.7H154.6M148.1 78.7L143.8 83.4" fill="none" stroke="#345f9e" stroke-width="1.75"/><circle cx="148.1" cy="72.4" r="1.35" fill="#d6151c" stroke="#8a0a0e" stroke-width=".35"/><circle cx="154.6" cy="78.7" r="1.35" fill="#d6151c" stroke="#8a0a0e" stroke-width=".35"/><circle cx="143.8" cy="83.4" r="1.35" fill="#d6151c" stroke="#8a0a0e" stroke-width=".35"/><circle cx="148.1" cy="78.7" r="1.35" fill="#d6151c" stroke="#8a0a0e" stroke-width=".35"/></svg>
<svg style="left:0;top:0" width="768" height="100" viewBox="0 0 768 100"><defs><radialGradient id="rb0" cx=".6" cy=".62" r=".7"><stop offset="0" stop-color="#21529a"/><stop offset="1" stop-color="#6ea2e2"/></radialGradient></defs><path d="M161.9 72.6C164 73.6 166 74.2 167.7 73.9C169.6 73.4 171.2 72.4 172.8 71.4L174.4 74.4C172.6 76.4 171.4 78 171.2 79.7C171.2 81.2 171.6 82.4 172.2 84.2L167.7 84.1C165.8 83.6 164 82.8 162.4 82L161.4 80.4C161.9 79.2 162.2 78.2 162.2 77.2C162.2 75.6 162 74.2 161.9 72.6Z" fill="url(#rb0)" stroke="#2a5fa8" stroke-width=".5" transform="translate(0 0)"/><circle cx="173.2" cy="72.6" r="1.2" fill="#d6151c" stroke="#8a0a0e" stroke-width=".35"/><circle cx="162.5" cy="77.2" r="1.2" fill="#d6151c" stroke="#8a0a0e" stroke-width=".35"/><circle cx="171.5" cy="83.4" r="1.2" fill="#d6151c" stroke="#8a0a0e" stroke-width=".35"/></svg>
<svg style="left:0;top:0" width="768" height="100" viewBox="0 0 768 100"><defs><radialGradient id="rb18" cx=".6" cy=".62" r=".7"><stop offset="0" stop-color="#2f9a0c"/><stop offset="1" stop-color="#6fe02a"/></radialGradient></defs><path d="M161.9 72.6C164 73.6 166 74.2 167.7 73.9C169.6 73.4 171.2 72.4 172.8 71.4L174.4 74.4C172.6 76.4 171.4 78 171.2 79.7C171.2 81.2 171.6 82.4 172.2 84.2L167.7 84.1C165.8 83.6 164 82.8 162.4 82L161.4 80.4C161.9 79.2 162.2 78.2 162.2 77.2C162.2 75.6 162 74.2 161.9 72.6Z" fill="url(#rb18)" stroke="#3aa012" stroke-width=".5" transform="translate(18.5 0)"/><circle cx="191.7" cy="72.6" r="1.2" fill="#d6151c" stroke="#8a0a0e" stroke-width=".35"/><circle cx="181.0" cy="77.2" r="1.2" fill="#d6151c" stroke="#8a0a0e" stroke-width=".35"/><circle cx="190.0" cy="83.4" r="1.2" fill="#d6151c" stroke="#8a0a0e" stroke-width=".35"/></svg>
<svg style="left:198.4px;top:71.2px" width="13.6" height="13.4" viewBox="0 0 13.6 13.4"><path d="M1 9.6C-.2 7 .8 3.8 3.6 2.6C4.6 .4 9 .4 10 2.6C12.8 3.8 13.8 7 12.6 9.6C11.4 9.2 10.8 8 10.6 6.8C10.6 9.6 9.6 12.4 6.8 13C4 12.4 3 9.6 3 6.8C2.8 8 2.2 9.2 1 9.6Z" fill="#f58220" stroke="#b85a0c" stroke-width=".5"/><path d="M5 11.2C5.6 12.6 8 12.6 8.6 11.2L6.8 11.9Z" fill="#8a3a05"/><ellipse cx="7" cy="6.6" rx="2.3" ry="1.6" fill="#fff"/><ellipse cx="7.4" cy="6.7" rx="1.1" ry=".9" fill="#222"/></svg>
<div class="a" style="left:215.3px;top:68px;width:1px;height:19px;background:#d4d4d4"></div>
<div class="a" style="left:216.3px;top:68px;width:1px;height:19px;background:#fbfbfb"></div>
<svg style="left:218.5px;top:69.5px" width="1" height="15.0" viewBox="0 0 1 15.0"><path d="M.5 0V15.0" stroke="#b9b9b9" stroke-width="1" stroke-dasharray="1 1.2"/></svg>
<svg style="left:224px;top:71px" width="14" height="14" viewBox="0 0 14 14"><path d="M1.6 9.6L.8 11.4L5.8 13.6L13.2 11.2L12.4 9.6" fill="#e4e4e4" stroke="#6c6c6c" stroke-width=".7" stroke-linejoin="round"/><path d="M2.6 10.6L6 12L11.6 10.2" fill="none" stroke="#7c7c7c" stroke-width=".6"/><path d="M1 3.8L6.6 1.4L13 3V7.6L6.2 10.4L1 8.4Z" fill="url(#gye)" stroke="#8a7403" stroke-width=".5" stroke-linejoin="round"/><path d="M1 3.8L6.2 5.6L13 3M6.2 5.6V10.4" fill="none" stroke="#8a7403" stroke-width=".5" stroke-linejoin="round"/><path d="M1 3.8L6.6 1.4L13 3L6.2 5.6Z" fill="#fff36a"/></svg>
<svg style="left:242.5px;top:70.5px" width="15" height="14" viewBox="0 0 15 14"><path d="M.7 5.2C4 2.6 8 1.6 11.6 2.3L14.4 8C11.4 8.6 9 10.6 7.6 13.6L3.5 10.8C3.4 8.6 2.4 6.6 .7 5.2Z" fill="url(#gye)" stroke="#8a7403" stroke-width=".5" stroke-linejoin="round"/><path d="M3.5 10.8C5 7.6 8 5.4 11.6 5.2" fill="none" stroke="#8a7403" stroke-width=".4"/><path d="M.3 12.6L3.6 10.4M12 4L14.3 2.2" stroke="#d6151c" stroke-width="1.1"/></svg>
<svg style="left:261.5px;top:70.5px" width="13.5" height="14" viewBox="0 0 13.5 14"><path d="M.8 6.4L4.8 2.3L12 3.5V12.8L.8 12Z" fill="url(#gye)" stroke="#8a7403" stroke-width=".4" stroke-linejoin="round"/><path d="M4.8 2.3L12 3.5V12.8" fill="none" stroke="#d6151c" stroke-width="1.2" stroke-linejoin="round"/><path d="M5.2 6.6L12 3.5M5.2 12L12 12.8" stroke="#8a7403" stroke-width=".35" fill="none"/><path d="M.9 6.5H5.2V12H.9Z" fill="#f5e23a" stroke="#d6151c" stroke-width="1.2"/><path d="M2.3 8.4H3.8V10.2H2.3Z" fill="#c9a80a"/></svg>
<svg style="left:280px;top:70.5px" width="14.5" height="14" viewBox="0 0 14.5 14"><path d="M.6 8.4C2.6 6.8 4.2 4.2 4.8 1.6L10.2 3.6C11 6 12 8 13.4 9.6L8.4 13.2L.6 13.2Z" fill="url(#gye)" stroke="#8a7403" stroke-width=".4" stroke-linejoin="round"/><path d="M4.8 1.6L10.2 3.6C11 6 12 8 13.4 9.6" fill="none" stroke="#d6151c" stroke-width="1.2"/><path d="M5 8.6C6.6 7.4 8 5.6 8.6 3.2" fill="none" stroke="#8a7403" stroke-width=".4"/><path d="M.7 8.5H5V13.2H.7Z" fill="#a01010" stroke="#d6151c" stroke-width="1.1"/><path d="M1.9 10H3.6V11.8H1.9Z" fill="#6a0808"/><circle cx="12.8" cy="1.6" r=".8" fill="#d6151c"/></svg>
<svg style="left:299px;top:70.6px" width="14" height="14" viewBox="0 0 14 14"><path d="M1.6 10.8C1 8.6 2.4 6.4 4.4 5.2C5.4 2.6 7.6 .8 9.4 .8C10.2 2.4 10.4 4 10 5.4C11.6 6.4 12 8.4 10.8 10C9.6 11.4 7.8 11.4 6.8 10.4C6.6 12 5.6 13 4.2 13.2C3 13 2 12 1.6 10.8Z" fill="url(#gye)" stroke="#8a7403" stroke-width=".5"/><path d="M4.6 9.4C4.8 7.6 6.4 6.4 8 6.8C8.8 7.2 8.8 8.4 8 8.8" fill="none" stroke="#8a7403" stroke-width=".9"/><path d="M.4 13.4L13 3.2" stroke="#d6151c" stroke-width="1.1"/></svg>
<svg style="left:317.7px;top:71.5px" width="13.4" height="13.4" viewBox="0 0 13.4 13.4"><path d="M.8 2.6L3.4 .9L12 1.4L12.4 9.4L7.6 11.6L.9 10.8Z" fill="#f7e640" stroke="#8a7403" stroke-width=".5" stroke-linejoin="round"/><path d="M.8 2.6L3.4 .9L12 1.4L7.6 3Z" fill="#fff685"/><path d="M7.6 3L12 1.4L12.4 9.4L7.6 11.6Z" fill="#d6bd0c"/><path d="M7.6 3V11.8M1 11L7.6 11.9L12.3 9.6" fill="none" stroke="#d6151c" stroke-width="1"/><circle cx="7.6" cy="3.2" r="1" fill="#d6151c"/><circle cx="1.2" cy="11" r="1.05" fill="#d6151c"/><circle cx="7.6" cy="12" r="1.05" fill="#d6151c"/><circle cx="12.1" cy="9.7" r="1.05" fill="#d6151c"/></svg>
<svg style="left:334.8px;top:76.8px" width="4.4" height="2.6" viewBox="0 0 4.4 2.6"><path d="M0 0H4.4L2.2 2.6Z" fill="#111"/></svg>
<div class="a" style="left:342.0px;top:71px;width:1px;height:14px;background:#cfcfcf"></div>
<svg style="left:347px;top:70.5px" width="13.6" height="14" viewBox="0 0 13.6 14"><path d="M.8 6L6.4 2.4L12.8 4V8.6L6.6 12.6L.8 10.6Z" fill="url(#gbl2)" stroke="#123a73" stroke-width=".55" stroke-linejoin="round"/><path d="M.8 6L6.6 7.8L12.8 4M6.6 7.8V12.6" fill="none" stroke="#123a73" stroke-width=".55" stroke-linejoin="round"/><path d="M.8 6L6.4 2.4L12.8 4L6.6 7.8Z" fill="#79ace6"/><path d="M4 5.6L6.6 4L9.8 4.8L7 6.6Z" fill="#d6151c" stroke="#7a0a0e" stroke-width=".4"/></svg>
<svg style="left:365.5px;top:70.5px" width="14" height="14" viewBox="0 0 14 14"><path d="M.8 1.4L10.2 .8L13.2 2.6V13L10.2 13.4L.8 12.2Z" fill="url(#gbl2)" stroke="#123a73" stroke-width=".55" stroke-linejoin="round"/><path d="M10.2 .8V13.4" stroke="#123a73" stroke-width=".55" stroke-linejoin="round"/><ellipse cx="5.4" cy="6.8" rx="3.4" ry="4.4" fill="#d6151c" stroke="#7a0a0e" stroke-width=".5"/><ellipse cx="6.2" cy="6.8" rx="2.2" ry="3.4" fill="#8c0d12"/></svg>
<svg style="left:384px;top:70.5px" width="14.5" height="14" viewBox="0 0 14.5 14"><path d="M2 7C3.4 3.6 7 1.8 10 2.6L12.4 9.6C10 9 7.6 10.2 6.4 13Z" fill="url(#gbl2)" stroke="#123a73" stroke-width=".55" stroke-linejoin="round"/><path d="M3 5.4C5.4 6.4 7 9 7.4 11.2" stroke="#d6151c" stroke-width="1.6" fill="none"/><path d="M6.6 3C8.6 4.4 10 7 10.2 9.4" stroke="#d6151c" stroke-width="1.4" fill="none"/><path d="M.6 13L4.6 9.6M10.4 4.6L14 1.6" stroke="#d6151c" stroke-width="1.1"/></svg>
<svg style="left:403.4px;top:70.5px" width="13.5" height="14" viewBox="0 0 13.5 14"><path d="M.8 6.4L4.8 2.3L12 3.5V12.8L.8 12Z" fill="url(#grd)" stroke="#6d060a" stroke-width=".4" stroke-linejoin="round"/><path d="M4.8 2.3L12 3.5V12.8" fill="none" stroke="#2a5ca8" stroke-width="1.2" stroke-linejoin="round"/><path d="M5.2 6.6L12 3.5M5.2 12L12 12.8" stroke="#6d060a" stroke-width=".35" fill="none"/><path d="M.9 6.5H5.2V12H.9Z" fill="#e3262b" stroke="#2a5ca8" stroke-width="1.2"/><path d="M2.3 8.4H3.8V10.2H2.3Z" fill="#2a5ca8"/></svg>
<svg style="left:421px;top:70.5px" width="14.5" height="14" viewBox="0 0 14.5 14"><path d="M.6 8.4C2.6 6.8 4.2 4.2 4.8 1.6L10.2 3.6C11 6 12 8 13.4 9.6L8.4 13.2L.6 13.2Z" fill="url(#grd)" stroke="#6d060a" stroke-width=".4" stroke-linejoin="round"/><path d="M4.8 1.6L10.2 3.6C11 6 12 8 13.4 9.6" fill="none" stroke="#2a5ca8" stroke-width="1.2"/><path d="M5 8.6C6.6 7.4 8 5.6 8.6 3.2" fill="none" stroke="#6d060a" stroke-width=".4"/><path d="M.7 8.5H5V13.2H.7Z" fill="#e3262b" stroke="#2a5ca8" stroke-width="1.1"/><path d="M1.9 10H3.6V11.8H1.9Z" fill="#2a5ca8"/><circle cx="12.8" cy="1.6" r=".8" fill="#2a5ca8"/></svg>
<svg style="left:440.2px;top:70.6px" width="14" height="14" viewBox="0 0 14 14"><path d="M1.6 10.8C1 8.6 2.4 6.4 4.4 5.2C5.4 2.6 7.6 .8 9.4 .8C10.2 2.4 10.4 4 10 5.4C11.6 6.4 12 8.4 10.8 10C9.6 11.4 7.8 11.4 6.8 10.4C6.6 12 5.6 13 4.2 13.2C3 13 2 12 1.6 10.8Z" fill="url(#gbl2)" stroke="#123a73" stroke-width=".5"/><path d="M4.6 9.4C4.8 7.6 6.4 6.4 8 6.8C8.8 7.2 8.8 8.4 8 8.8" fill="none" stroke="#123a73" stroke-width=".9"/><path d="M.4 13.4L13 3.2" stroke="#d6151c" stroke-width="1.1"/></svg>
<svg style="left:458.8px;top:71.5px" width="13.4" height="13.4" viewBox="0 0 13.4 13.4"><path d="M.8 2.6L3.4 .9L12 1.4L12.4 9.4L7.6 11.6L.9 10.8Z" fill="#e3262b" stroke="#6d060a" stroke-width=".5" stroke-linejoin="round"/><path d="M.8 2.6L3.4 .9L12 1.4L7.6 3Z" fill="#f0585c"/><path d="M7.6 3L12 1.4L12.4 9.4L7.6 11.6Z" fill="#b30d12"/><path d="M7.6 3V11.8M1 11L7.6 11.9L12.3 9.6" fill="none" stroke="#2a5ca8" stroke-width="1"/><circle cx="7.6" cy="3.2" r="1" fill="#2a5ca8"/><circle cx="1.2" cy="11" r="1.05" fill="#2a5ca8"/><circle cx="7.6" cy="12" r="1.05" fill="#2a5ca8"/><circle cx="12.1" cy="9.7" r="1.05" fill="#2a5ca8"/></svg>
<svg style="left:476.2px;top:76.8px" width="4.4" height="2.6" viewBox="0 0 4.4 2.6"><path d="M0 0H4.4L2.2 2.6Z" fill="#111"/></svg>
<div class="a" style="left:482.5px;top:71px;width:1px;height:14px;background:#cfcfcf"></div>
<svg style="left:487.6px;top:70.5px" width="14.5" height="14" viewBox="0 0 14.5 14"><path d="M.6 6.6L4.6 3.8L10.4 2.2L13.8 1.4V13L.6 13.4Z" fill="#2c5fa6" stroke="#123a73" stroke-width=".55" stroke-linejoin="round"/><path d="M.6 9.6L13.8 8.6V13L.6 13.4Z" fill="#4a84cc"/><path d="M.6 6.6L4.6 3.8L13.8 1.4V3.4L.6 9.6Z" fill="#5a92d6" fill-opacity=".55"/><path d="M1.6 6.6L4 1.6L6.4 .8L5.6 6.2Z" fill="#4a86cc" stroke="#123a73" stroke-width=".4"/><path d="M6.4 6.6V10.6A3 1.6500000000000001 0 0 0 12.4 10.6V6.6Z" fill="#e4c817" stroke="#7d6903" stroke-width=".4"/><ellipse cx="9.4" cy="6.6" rx="3" ry="1.6500000000000001" fill="#fff04a" stroke="#7d6903" stroke-width=".4"/><path d="M1.4 9.6L3.4 11.4M1.4 11.4L3.4 9.6" stroke="#d6151c" stroke-width=".8"/></svg>
<svg style="left:506px;top:70.5px" width="14.5" height="14" viewBox="0 0 14.5 14"><path d="M.6 6.6L4.6 3.8L10.4 2.2L13.8 1.4V13L.6 13.4Z" fill="#2c5fa6" stroke="#123a73" stroke-width=".55" stroke-linejoin="round"/><path d="M.6 9.6L13.8 8.6V13L.6 13.4Z" fill="#4a84cc"/><path d="M.6 6.6L4.6 3.8L13.8 1.4V3.4L.6 9.6Z" fill="#5a92d6" fill-opacity=".55"/><path d="M1.9 8.4V10.0A1.5 0.8250000000000001 0 0 0 4.9 10.0V8.4Z" fill="#e4c817" stroke="#7d6903" stroke-width=".4"/><ellipse cx="3.4" cy="8.4" rx="1.5" ry="0.8250000000000001" fill="#fff04a" stroke="#7d6903" stroke-width=".4"/><path d="M5.4 7.2V9.0A1.6 0.8800000000000001 0 0 0 8.6 9.0V7.2Z" fill="#e4c817" stroke="#7d6903" stroke-width=".4"/><ellipse cx="7" cy="7.2" rx="1.6" ry="0.8800000000000001" fill="#fff04a" stroke="#7d6903" stroke-width=".4"/><path d="M8.9 6V8A1.7 0.935 0 0 0 12.299999999999999 8V6Z" fill="#e4c817" stroke="#7d6903" stroke-width=".4"/><ellipse cx="10.6" cy="6" rx="1.7" ry="0.935" fill="#fff04a" stroke="#7d6903" stroke-width=".4"/></svg>
<svg style="left:525.2px;top:70.5px" width="14.5" height="14" viewBox="0 0 14.5 14"><path d="M.6 6.6L4.6 3.8L10.4 2.2L13.8 1.4V13L.6 13.4Z" fill="#2c5fa6" stroke="#123a73" stroke-width=".55" stroke-linejoin="round"/><path d="M.6 9.6L13.8 8.6V13L.6 13.4Z" fill="#4a84cc"/><path d="M.6 6.6L4.6 3.8L13.8 1.4V3.4L.6 9.6Z" fill="#5a92d6" fill-opacity=".55"/><path d="M5.3 3.4V5.0A1.7 0.935 0 0 0 8.7 5.0V3.4Z" fill="#e4c817" stroke="#7d6903" stroke-width=".4"/><ellipse cx="7" cy="3.4" rx="1.7" ry="0.935" fill="#fff04a" stroke="#7d6903" stroke-width=".4"/><path d="M1.7 7.4V9.200000000000001A1.7 0.935 0 0 0 5.1 9.200000000000001V7.4Z" fill="#e4c817" stroke="#7d6903" stroke-width=".4"/><ellipse cx="3.4" cy="7.4" rx="1.7" ry="0.935" fill="#fff04a" stroke="#7d6903" stroke-width=".4"/><path d="M8.799999999999999 6.4V8.200000000000001A1.8 0.9900000000000001 0 0 0 12.4 8.200000000000001V6.4Z" fill="#e4c817" stroke="#7d6903" stroke-width=".4"/><ellipse cx="10.6" cy="6.4" rx="1.8" ry="0.9900000000000001" fill="#fff04a" stroke="#7d6903" stroke-width=".4"/><path d="M5.8999999999999995 10V11.6A1.7 0.935 0 0 0 9.299999999999999 11.6V10Z" fill="#e4c817" stroke="#7d6903" stroke-width=".4"/><ellipse cx="7.6" cy="10" rx="1.7" ry="0.935" fill="#fff04a" stroke="#7d6903" stroke-width=".4"/><circle cx="7" cy="7" r="1" fill="#1a3f7d"/></svg>
<svg style="left:544px;top:70.5px" width="14.5" height="14" viewBox="0 0 14.5 14"><path d="M.6 6.6L4.6 3.8L10.4 2.2L13.8 1.4V13L.6 13.4Z" fill="#2c5fa6" stroke="#123a73" stroke-width=".55" stroke-linejoin="round"/><path d="M.6 9.6L13.8 8.6V13L.6 13.4Z" fill="#4a84cc"/><path d="M.6 6.6L4.6 3.8L13.8 1.4V3.4L.6 9.6Z" fill="#5a92d6" fill-opacity=".55"/><path d="M3 3.8V5.8A2 1.1 0 0 0 7 5.8V3.8Z" fill="#e4c817" stroke="#7d6903" stroke-width=".4"/><ellipse cx="5" cy="3.8" rx="2" ry="1.1" fill="#fff04a" stroke="#7d6903" stroke-width=".4"/><path d="M7.4 3.2V7.2A3 1.6500000000000001 0 0 0 13.4 7.2V3.2Z" fill="#e4c817" stroke="#7d6903" stroke-width=".4"/><ellipse cx="10.4" cy="3.2" rx="3" ry="1.6500000000000001" fill="#fff04a" stroke="#7d6903" stroke-width=".4"/><path d="M1.8 9.2V11.0A1.8 0.9900000000000001 0 0 0 5.4 11.0V9.2Z" fill="#e4c817" stroke="#7d6903" stroke-width=".4"/><ellipse cx="3.6" cy="9.2" rx="1.8" ry="0.9900000000000001" fill="#fff04a" stroke="#7d6903" stroke-width=".4"/><path d="M7.4 10V11.8A2 1.1 0 0 0 11.4 11.8V10Z" fill="#e4c817" stroke="#7d6903" stroke-width=".4"/><ellipse cx="9.4" cy="10" rx="2" ry="1.1" fill="#fff04a" stroke="#7d6903" stroke-width=".4"/></svg>
<div class="a" style="left:561.0px;top:71px;width:1px;height:14px;background:#cfcfcf"></div>
<svg style="left:565.8px;top:71px" width="14.8" height="14" viewBox="0 0 14.8 14"><path d="M.8 7.6L6 12.8L14 8.4V3.8L8.6 2.2Z" fill="url(#gbl2)" stroke="#123a73" stroke-width=".55" stroke-linejoin="round"/><path d="M.8 7.6C1.2 3.6 4 1.4 8.6 2.2L14 3.8C9.6 3.2 6.6 6 6 9.8V12.8L.8 10.6Z" fill="#e3262b" stroke="#6d060a" stroke-width=".5" stroke-linejoin="round"/><path d="M6 9.8V12.8L.8 10.6V7.6Z" fill="#3b72b8" stroke="#123a73" stroke-width=".55" stroke-linejoin="round"/></svg>
<svg style="left:584.5px;top:71px" width="14.8" height="14" viewBox="0 0 14.8 14"><path d="M.8 9L6 12.8L14 8.4V4L9.4 2.4Z" fill="url(#gbl2)" stroke="#123a73" stroke-width=".55" stroke-linejoin="round"/><path d="M.8 9L5.4 2.2L9.8 1.2L14 4L6 9.8Z" fill="#e3262b" stroke="#6d060a" stroke-width=".5" stroke-linejoin="round"/><path d="M.8 9L6 9.8V12.8L.8 11.4Z" fill="#3b72b8" stroke="#123a73" stroke-width=".55" stroke-linejoin="round"/></svg>
<svg style="left:603.2px;top:71px" width="14.6" height="14" viewBox="0 0 14.6 14"><path d="M.8 3.8L7 .8L13.8 3V10.4L7 13.6L.8 11Z" fill="#3b72b8" stroke="#123a73" stroke-width=".55" stroke-linejoin="round"/><path d="M.8 3.8L7 .8L13.8 3L7.2 5.4Z" fill="#7fb0e8" stroke="#123a73" stroke-width=".55" stroke-linejoin="round"/><path d="M2.2 5.4L7 6.8V12.6L2.2 10.6Z" fill="#e3262b" stroke="#6d060a" stroke-width=".5" stroke-linejoin="round"/><path d="M8 6.8L12.6 4.8V10L8 12.4Z" fill="#c4141a" stroke="#6d060a" stroke-width=".5" stroke-linejoin="round"/></svg>
<svg style="left:621.8px;top:71px" width="14.6" height="14" viewBox="0 0 14.6 14"><path d="M1 2.6L9.4 .8L13.6 2.4L12.6 11.4L8 13.6L1.6 11.8Z" fill="#3b72b8" stroke="#123a73" stroke-width=".55" stroke-linejoin="round"/><path d="M2.6 3.8L8.6 2.6L11.8 3.8L11 10.6L7.8 12L3.2 10.6Z" fill="#e3262b" stroke="#6d060a" stroke-width=".5" stroke-linejoin="round"/><path d="M8.2 5L11.8 3.8L11 10.6L7.8 12Z" fill="#a50e13"/></svg>
<div class="a" style="left:639.3px;top:71px;width:1px;height:14px;background:#cfcfcf"></div>
<svg style="left:644.6px;top:71px" width="14.4" height="14" viewBox="0 0 14.4 14"><circle cx="9.2" cy="5.2" r="4.6" fill="url(#gsp)"/><circle cx="5.2" cy="8.6" r="4.7" fill="url(#gsp)" stroke="#2a5a9e" stroke-width=".3"/></svg>
<div class="a" style="left:661.8px;top:68px;width:1px;height:19px;background:#d4d4d4"></div>
<div class="a" style="left:662.8px;top:68px;width:1px;height:19px;background:#fbfbfb"></div>
<svg style="left:665.0px;top:69.5px" width="1" height="15.0" viewBox="0 0 1 15.0"><path d="M.5 0V15.0" stroke="#b9b9b9" stroke-width="1" stroke-dasharray="1 1.2"/></svg>
<svg style="left:669.8px;top:71px" width="14.5" height="14" viewBox="0 0 14.5 14"><path d="M1.4 1.8L3.6 .7H9.4Q10.6 .7 10.6 2V8.8L8.4 10.9H2Q.8 10.9 .8 9.6V3Q.8 2 1.4 1.8Z" fill="#b9bbb5" stroke="#4e514c" stroke-width=".55"/><path d="M.9 2.6H8.3V10.8M8.3 2.6L10.5 1" fill="none" stroke="#6a6d68" stroke-width=".4"/><circle cx="4.6" cy="6.6" r="2.9" fill="#2a2a2a"/><path d="M1.8 6.9A2.8 2.8 0 0 1 6.4 4.4L4.6 6.6Z" fill="#f4dc1c"/><path d="M1.8 6.9A2.8 2.8 0 0 1 6.4 4.4" fill="none" stroke="#f4dc1c" stroke-width=".9"/><path d="M7.4 10.2L12.2 12.9L14 12.2" fill="none" stroke="#5a4e08" stroke-width="1.9"/><path d="M7.4 10.2L12.2 12.9L14 12.2" fill="none" stroke="#ead21c" stroke-width="1.1"/></svg>
<svg style="left:688.4px;top:71px" width="14.5" height="14" viewBox="0 0 14.5 14"><path d="M1.4 1.8L3.6 .7H9.4Q10.6 .7 10.6 2V8.8L8.4 10.9H2Q.8 10.9 .8 9.6V3Q.8 2 1.4 1.8Z" fill="#b9bbb5" stroke="#4e514c" stroke-width=".55"/><path d="M.9 2.6H8.3V10.8M8.3 2.6L10.5 1" fill="none" stroke="#6a6d68" stroke-width=".4"/><circle cx="4.6" cy="6.6" r="2.9" fill="#2a2a2a"/><path d="M1.8 6.9A2.8 2.8 0 0 1 6.4 4.4L4.6 6.6Z" fill="#f4dc1c"/><path d="M1.8 6.9A2.8 2.8 0 0 1 6.4 4.4" fill="none" stroke="#f4dc1c" stroke-width=".9"/><path d="M7.4 10.2L12.2 12.9L14 12.2" fill="none" stroke="#5a4e08" stroke-width="1.9"/><path d="M7.4 10.2L12.2 12.9L14 12.2" fill="none" stroke="#ead21c" stroke-width="1.1"/><path d="M1 .8L12.6 8.2M1 .8L5.4 12.4L12.6 8.2" fill="none" stroke="#d6151c" stroke-width="1.3"/><path d="M6 3.6C8.4 3 10.4 4.4 10.6 6.6" fill="none" stroke="#2a5ca8" stroke-width="1.2"/></svg>
<div class="a" style="left:706.1px;top:71px;width:1px;height:14px;background:#dcdcdc"></div>
<svg style="left:710.6px;top:71px" width="15" height="14" viewBox="0 0 15 14"><path d="M1.4 1.8L3.6 .7H9.4Q10.6 .7 10.6 2V8.8L8.4 10.9H2Q.8 10.9 .8 9.6V3Q.8 2 1.4 1.8Z" fill="#b9bbb5" stroke="#4e514c" stroke-width=".55"/><path d="M.9 2.6H8.3V10.8M8.3 2.6L10.5 1" fill="none" stroke="#6a6d68" stroke-width=".4"/><circle cx="4.6" cy="6.6" r="2.9" fill="#2a2a2a"/><path d="M1.8 6.9A2.8 2.8 0 0 1 6.4 4.4L4.6 6.6Z" fill="#f4dc1c"/><path d="M1.8 6.9A2.8 2.8 0 0 1 6.4 4.4" fill="none" stroke="#f4dc1c" stroke-width=".9"/><path d="M7.4 10.2L12.2 12.9L14 12.2" fill="none" stroke="#5a4e08" stroke-width="1.9"/><path d="M7.4 10.2L12.2 12.9L14 12.2" fill="none" stroke="#ead21c" stroke-width="1.1"/><path d="M9.4 2.2A3 3 0 1 1 13.8 6.2" fill="none" stroke="#3a7fd0" stroke-width="1.3"/><path d="M8.4 1.4L11 1.6L9.6 4Z" fill="#3a7fd0"/></svg>
<svg style="left:729px;top:71px" width="14.5" height="14" viewBox="0 0 14.5 14"><path d="M1.4 1.8L3.6 .7H9.4Q10.6 .7 10.6 2V8.8L8.4 10.9H2Q.8 10.9 .8 9.6V3Q.8 2 1.4 1.8Z" fill="#b9bbb5" stroke="#4e514c" stroke-width=".55"/><path d="M.9 2.6H8.3V10.8M8.3 2.6L10.5 1" fill="none" stroke="#6a6d68" stroke-width=".4"/><circle cx="4.6" cy="6.6" r="2.9" fill="#2a2a2a"/><path d="M1.8 6.9A2.8 2.8 0 0 1 6.4 4.4L4.6 6.6Z" fill="#f4dc1c"/><path d="M1.8 6.9A2.8 2.8 0 0 1 6.4 4.4" fill="none" stroke="#f4dc1c" stroke-width=".9"/><path d="M7.4 10.2L12.2 12.9L14 12.2" fill="none" stroke="#5a4e08" stroke-width="1.9"/><path d="M7.4 10.2L12.2 12.9L14 12.2" fill="none" stroke="#ead21c" stroke-width="1.1"/><path d="M.8 7.6L6.2 13.2M6.2 7.6L.8 13.2" stroke="#d6151c" stroke-width="1.7"/></svg>
<svg style="left:762.5px;top:75.5px" width="5" height="4" viewBox="0 0 5 4"><path d="M.4 .4L2 2L.4 3.6M2.8 .4L4.4 2L2.8 3.6" fill="none" stroke="#555" stroke-width=".6"/></svg>
<div class="a" style="left:0px;top:88px;width:160.5px;height:12px;background:#e6e6e6"></div>
<div class="t " style="left:3px;top:90.50px;font-size:7.4px;letter-spacing:-0.257px;">Combo View</div>
<svg style="left:138.5px;top:91.6px" width="6" height="6" viewBox="0 0 6 6"><path d="M.6 2.4H4V5.4H.6Z M1.8 2.4V.8H5.2V3.8H4" fill="none" stroke="#333" stroke-width=".7"/></svg>
<svg style="left:151.5px;top:92.2px" width="5" height="5" viewBox="0 0 5 5"><path d="M.4 .4L4.6 4.6M4.6 .4L.4 4.6" stroke="#222" stroke-width=".9"/></svg>
<div class="a" style="left:33px;top:103.3px;width:29.5px;height:12px;background:#f0f0f0;border:1px solid #e0e0e0;border-bottom:none"></div>
<div class="a" style="left:2px;top:102px;width:31px;height:13.5px;background:#fff;border:1px solid #dedede;border-bottom:none"></div>
<div class="t " style="left:7.4px;top:102.70px;font-size:7.2px;letter-spacing:-0.360px;">Model</div>
<div class="t " style="left:39.4px;top:103.60px;font-size:7.2px;letter-spacing:-0.360px;">Tasks</div>
<div class="a" style="left:2px;top:114.8px;width:157px;height:178.6px;background:#fff;border:1px solid #cfcfcf"></div>
<div class="a" style="left:108.6px;top:116px;width:0.7px;height:13px;background:#e5e5e5"></div>
<div class="t " style="left:4.3px;top:118.70px;font-size:7.2px;letter-spacing:0.037px;">Labels &amp; Attributes</div>
<div class="t " style="left:111.6px;top:118.70px;font-size:7.2px;letter-spacing:-0.061px;">Description</div>
<div class="t " style="left:4.3px;top:131.40px;font-size:7.2px;letter-spacing:-0.012px;">Application</div>
<svg style="left:5.0px;top:145.3px" width="5.2" height="3.2" viewBox="0 0 5.2 3.2"><path d="M.4 .4L2.6 2.6L4.8 .4" fill="none" stroke="#333" stroke-width="1.2"/></svg>
<svg style="left:16.4px;top:142.4px" width="8" height="9" viewBox="0 0 8 9"><path d="M.5 .5H5.6L7.4 2.2V8.5H.5Z" fill="#f4f4f4" stroke="#9a9a9a" stroke-width=".5"/><path d="M2 5L3.6 3.8L6 4.4V6.8L4.2 8L2 7.2Z" fill="#3b74bd" stroke="#173f78" stroke-width=".4"/><path d="M3 3.4L4.4 2.2L6.6 2.8V4.6L5 5.6L3 5Z" fill="#e12a2a" stroke="#7a0a0e" stroke-width=".4"/></svg>
<div class="t b" style="left:29px;top:141.60px;font-size:7.2px;letter-spacing:-0.050px;">Unnamed</div>
<div class="a" style="left:27px;top:152.8px;width:131.5px;height:12.2px;background:#cce8ff"></div>
<div class="a" style="left:27px;top:152.8px;width:82px;height:12.2px;border:1px solid #99d1ff"></div>
<svg style="left:17.0px;top:157.1px" width="5.2" height="3.2" viewBox="0 0 5.2 3.2"><path d="M.4 .4L2.6 2.6L4.8 .4" fill="none" stroke="#333" stroke-width="1.2"/></svg>
<svg style="left:28.6px;top:153.6px" width="9.4" height="10.4" viewBox="0 0 11 12.6"><path d="M.4 3.3L3.8 .4L7.3 1.4V4.4L10.2 5.2V9.2L6.3 12.2L.4 9.2Z" fill="#3f7ac4" stroke="#153b72" stroke-width="0.5" stroke-linejoin="round"/><path d="M.4 3.3L3.8 .4L7.3 1.4L4 4.3Z" fill="#74a8e4" stroke="#153b72" stroke-width="0.35" stroke-linejoin="round"/><path d="M4 7.4L7.3 4.4L10.2 5.2L6.3 8.4Z" fill="#74a8e4" stroke="#153b72" stroke-width="0.35" stroke-linejoin="round"/><path d="M6.3 8.4L10.2 5.2V9.2L6.3 12.2Z" fill="#27569c" stroke="#153b72" stroke-width="0.35" stroke-linejoin="round"/><path d="M4 4.3L7.3 1.4V4.4L4 7.4Z" fill="#27569c" stroke="#153b72" stroke-width="0.35" stroke-linejoin="round"/></svg>
<div class="t " style="left:41px;top:153.70px;font-size:7.2px;letter-spacing:-0.154px;">Body001</div>
<svg style="left:30.5px;top:168.8px" width="3.2" height="5.2" viewBox="0 0 3.2 5.2"><path d="M.4 .4L2.6 2.6L.4 4.8" fill="none" stroke="#9a9a9a" stroke-width=".8"/></svg>
<svg style="left:40.2px;top:166.9px" width="9" height="9" viewBox="0 0 9 9"><path d="M3.4 1V5.4H8.4M3.4 5.4L.8 8.2" fill="none" stroke="#8a8a8a" stroke-width="1"/></svg>
<div class="t g" style="left:52.8px;top:166.50px;font-size:7.2px;">Origin</div>
<svg style="left:30.5px;top:180.6px" width="3.2" height="5.2" viewBox="0 0 3.2 5.2"><path d="M.4 .4L2.6 2.6L.4 4.8" fill="none" stroke="#9a9a9a" stroke-width=".8"/></svg>
<svg style="left:40.2px;top:178.7px" width="9" height="9" viewBox="0 0 9 9"><path d="M.5 6.4L4 5L8.5 6L5 8.4Z" fill="#cfcfcf" stroke="#777" stroke-width=".5"/><path d="M1 2.4L4.4 1L8 2V5L4.6 6.6L1 5.4Z" fill="#8f8f8f" stroke="#5f5f5f" stroke-width=".4"/><path d="M1 2.4L4.6 3.6L8 2" fill="none" stroke="#6f6f6f" stroke-width=".4"/><path d="M1 2.4L4.4 1L8 2L4.6 3.6Z" fill="#c9c9c9"/></svg>
<div class="t g" style="left:52.8px;top:178.30px;font-size:7.2px;">Pad</div>
<svg style="left:30.5px;top:192.4px" width="3.2" height="5.2" viewBox="0 0 3.2 5.2"><path d="M.4 .4L2.6 2.6L.4 4.8" fill="none" stroke="#9a9a9a" stroke-width=".8"/></svg>
<svg style="left:40.2px;top:190.5px" width="9" height="9" viewBox="0 0 9 9"><path d="M.5 4L4.6 1.2L8.5 2.4V5.6L4.4 8.2L.5 7Z" fill="#868686" stroke="#5c5c5c" stroke-width=".4"/><path d="M.5 4L4.6 1.2L8.5 2.4L4.4 5.2Z" fill="#c4c4c4" stroke="#6a6a6a" stroke-width=".3"/><path d="M3 3.8L4.8 2.6L6.4 3.2L4.6 4.4Z" fill="#7d7d7d"/></svg>
<div class="t g" style="left:52.8px;top:190.10px;font-size:7.2px;">Pocket</div>
<svg style="left:30.5px;top:204.20000000000002px" width="3.2" height="5.2" viewBox="0 0 3.2 5.2"><path d="M.4 .4L2.6 2.6L.4 4.8" fill="none" stroke="#9a9a9a" stroke-width=".8"/></svg>
<svg style="left:40.2px;top:202.3px" width="9" height="9" viewBox="0 0 9 9"><path d="M.5 6.4L4 5L8.5 6L5 8.4Z" fill="#cfcfcf" stroke="#777" stroke-width=".5"/><path d="M1 2.4L4.4 1L8 2V5L4.6 6.6L1 5.4Z" fill="#8f8f8f" stroke="#5f5f5f" stroke-width=".4"/><path d="M1 2.4L4.6 3.6L8 2" fill="none" stroke="#6f6f6f" stroke-width=".4"/><path d="M1 2.4L4.4 1L8 2L4.6 3.6Z" fill="#c9c9c9"/></svg>
<div class="t g" style="left:52.8px;top:201.90px;font-size:7.2px;">Pad001</div>
<svg style="left:40.2px;top:214.2px" width="9" height="9" viewBox="0 0 9 9"><path d="M.5 4.6L3 2.6L8.5 1V8L.5 8.4Z" fill="#909090" stroke="#626262" stroke-width=".4"/><path d="M2 5.6H3.4V7H2ZM4.2 5H5.6V6.4H4.2ZM6.4 4.4H7.8V5.8H6.4Z" fill="#d8d8d8"/></svg>
<div class="t g" style="left:52.8px;top:213.80px;font-size:7.2px;">LinearPattern</div>
<svg style="left:30.5px;top:228.0px" width="3.2" height="5.2" viewBox="0 0 3.2 5.2"><path d="M.4 .4L2.6 2.6L.4 4.8" fill="none" stroke="#9a9a9a" stroke-width=".8"/></svg>
<svg style="left:40.2px;top:226.1px" width="9" height="9" viewBox="0 0 9 9"><path d="M.5 6.4L4 5L8.5 6L5 8.4Z" fill="#cfcfcf" stroke="#777" stroke-width=".5"/><path d="M1 2.4L4.4 1L8 2V5L4.6 6.6L1 5.4Z" fill="#8f8f8f" stroke="#5f5f5f" stroke-width=".4"/><path d="M1 2.4L4.6 3.6L8 2" fill="none" stroke="#6f6f6f" stroke-width=".4"/><path d="M1 2.4L4.4 1L8 2L4.6 3.6Z" fill="#c9c9c9"/></svg>
<div class="t g" style="left:52.8px;top:225.70px;font-size:7.2px;">Pad002</div>
<svg style="left:40.2px;top:238.0px" width="9" height="9" viewBox="0 0 9 9"><path d="M.5 4.6L3 2.6L8.5 1V8L.5 8.4Z" fill="#909090" stroke="#626262" stroke-width=".4"/><path d="M2 5.6H3.4V7H2ZM4.2 5H5.6V6.4H4.2ZM6.4 4.4H7.8V5.8H6.4Z" fill="#d8d8d8"/></svg>
<div class="t g" style="left:52.8px;top:237.60px;font-size:7.2px;">LinearPattern001</div>
<svg style="left:30.5px;top:252.4px" width="3.2" height="5.2" viewBox="0 0 3.2 5.2"><path d="M.4 .4L2.6 2.6L.4 4.8" fill="none" stroke="#777" stroke-width=".8"/></svg>
<svg style="left:39.6px;top:250.2px" width="10" height="10" viewBox="0 0 10 10"><path d="M.5 3.4L4.4 1L9 2.2V6.6L5 9L.5 7.6Z" fill="#2f62a8" stroke="#14366b" stroke-width=".4"/><path d="M.5 3.4L4.4 1L9 2.2L5 4.6Z" fill="#6b9fdc"/><path d="M2.6 3.2L4.6 2L6.6 2.6L4.8 3.8Z" fill="#d6151c"/><path d="M.5 3.4L5 4.6V9L.5 7.6Z" fill="#e9e9e9" stroke="#777" stroke-width=".3"/><path d="M4 5.6H7.4V9.6H4Z" fill="#1ea01e"/><path d="M5.7 6.2V8.8M4.8 7.9L5.7 8.9L6.6 7.9" stroke="#fff" stroke-width=".7" fill="none"/></svg>
<div class="t b" style="left:52.8px;top:250.00px;font-size:7.2px;">Pocket001</div>
<div class="a" style="left:2.8px;top:283.4px;width:155.6px;height:9.3px;background:#cdcdcd"></div>
<div class="a" style="left:2.8px;top:283.4px;width:9.4px;height:9.3px;background:#f0f0f0"></div>
<svg style="left:5.6px;top:285.6px" width="3.4" height="5" viewBox="0 0 3.4 5"><path d="M2.8 .4L.6 2.5L2.8 4.6" fill="none" stroke="#555" stroke-width=".8"/></svg>
<div class="a" style="left:2px;top:298px;width:157px;height:76.4px;background:#fff;border:1px solid #cfcfcf"></div>
<div class="t " style="left:5.7px;top:301.90px;font-size:7.2px;letter-spacing:-0.087px;">Property</div>
<div class="a" style="left:63.2px;top:299px;width:0.7px;height:14px;background:#e5e5e5"></div>
<div class="a" style="left:2.8px;top:313.6px;width:155.6px;height:10.6px;background:#a0a0a0"></div>
<div class="t b" style="left:16.9px;top:314.80px;font-size:7.2px;letter-spacing:-0.360px;color:#fff">Base</div>
<div class="a" style="left:13px;top:324.9px;width:145px;height:0.6px;background:#e3e3e3"></div>
<div class="a" style="left:13px;top:337.1px;width:145px;height:0.6px;background:#e3e3e3"></div>
<div class="a" style="left:13px;top:349.7px;width:145px;height:0.6px;background:#e3e3e3"></div>
<div class="a" style="left:13px;top:362.4px;width:145px;height:0.6px;background:#e3e3e3"></div>
<div class="a" style="left:2.8px;top:324.2px;width:10.4px;height:49.4px;background:#f4f4f4"></div>
<div class="a" style="left:13px;top:324.2px;width:0.6px;height:49.4px;background:#e3e3e3"></div>
<div class="a" style="left:63.2px;top:324.2px;width:0.7px;height:49.4px;background:#e3e3e3"></div>
<div class="a" style="left:64.8px;top:329px;width:0.8px;height:6px;background:#f3c7a0"></div>
<div class="a" style="left:64.8px;top:354.6px;width:0.8px;height:6.4px;background:#f3c7a0"></div>
<div class="t " style="left:16.9px;top:327.50px;font-size:7.2px;letter-spacing:-0.067px;">Tip</div>
<div class="t " style="left:16.9px;top:340.10px;font-size:7.2px;letter-spacing:-0.360px;">Base Feature</div>
<div class="t " style="left:16.9px;top:352.60px;font-size:7.2px;letter-spacing:-0.114px;">Placement</div>
<div class="t " style="left:16.9px;top:365.10px;font-size:7.2px;letter-spacing:-0.360px;">Label</div>
<svg style="left:6.5px;top:354.4px" width="3.2" height="5.2" viewBox="0 0 3.2 5.2"><path d="M.4 .4L2.6 2.6L.4 4.8" fill="none" stroke="#8a8a8a" stroke-width=".8"/></svg>
<div class="t " style="left:66.5px;top:326.80px;font-size:7.2px;color:#e0821e;width:90px;overflow:hidden">Pocket001</div>
<div class="t " style="left:66.5px;top:351.80px;font-size:7.2px;color:#e0821e;width:90px;overflow:hidden">[(0.00 0.00 1.00); 0.00 °; (0.00 mm  0.00 mm  0.00 mm)]</div>
<div class="a" style="left:64.4px;top:363.4px;width:94px;height:11.4px;background:#fff;border:1px solid #d2d2d2"></div>
<div class="t " style="left:66px;top:365.20px;font-size:6.9px;letter-spacing:-0.206px;">Body001</div>
<svg style="left:149.0px;top:368.1px" width="5.2" height="3.2" viewBox="0 0 5.2 3.2"><path d="M.4 .4L2.6 2.6L4.8 .4" fill="none" stroke="#777" stroke-width="1.2"/></svg>
<div class="a" style="left:2px;top:375px;width:157.5px;height:14.2px;background:#fff"></div>
<div class="a" style="left:2px;top:376px;width:26.4px;height:11.6px;background:#f0f0f0;border:1px solid #e2e2e2;border-top:none"></div>
<div class="t " style="left:8.6px;top:377.40px;font-size:7.2px;letter-spacing:-0.360px;">View</div>
<div class="t " style="left:36.6px;top:377.90px;font-size:7.2px;letter-spacing:-0.360px;">Data</div>
<div class="a" style="left:28.4px;top:375px;width:29px;height:13.4px;border:1px solid #e6e6e6;border-top:none"></div>
<div class="a" style="left:66px;top:160px;width:126.6px;height:206.4px;background:#f2f2f2;border:1px solid #cccccc;box-shadow:1.5px 1.5px 2.5px rgba(0,0,0,.38)"></div>
<div class="t b" style="left:85.1px;top:163.80px;font-size:7.2px;letter-spacing:-0.069px;">Toggle active body</div>
<div class="t " style="left:85.1px;top:176.40px;font-size:7.2px;letter-spacing:-0.179px;">Transform</div>
<div class="a" style="left:69px;top:189.4px;width:120.6px;height:0.8px;background:#d9d9d9"></div>
<div class="a" style="left:67.6px;top:192.8px;width:123.4px;height:12.2px;background:#91c9f7"></div>
<div class="t " style="left:85.1px;top:194.80px;font-size:7.2px;letter-spacing:-0.311px;">Appearance...</div>
<div class="t " style="left:160px;top:194.80px;font-size:7.2px;letter-spacing:0.080px;">Ctrl+D</div>
<div class="t " style="left:85.1px;top:208.00px;font-size:7.2px;letter-spacing:-0.020px;">Random color</div>
<div class="t g" style="left:85.1px;top:221.20px;font-size:7.2px;letter-spacing:-0.302px;">Cut</div>
<div class="t g" style="left:160px;top:221.20px;font-size:7.2px;letter-spacing:0.059px;">Ctrl+X</div>
<div class="t " style="left:85.1px;top:234.20px;font-size:7.2px;letter-spacing:-0.302px;">Copy</div>
<div class="t " style="left:160px;top:234.20px;font-size:7.2px;letter-spacing:0.040px;">Ctrl+C</div>
<div class="t g" style="left:85.1px;top:247.20px;font-size:7.2px;letter-spacing:-0.360px;">Paste</div>
<div class="t g" style="left:160px;top:247.20px;font-size:7.2px;letter-spacing:0.059px;">Ctrl+V</div>
<div class="a" style="left:69px;top:260.2px;width:120.6px;height:0.8px;background:#d9d9d9"></div>
<div class="t " style="left:85.1px;top:265.50px;font-size:7.2px;letter-spacing:-0.182px;">Delete</div>
<div class="t " style="left:160.2px;top:265.50px;font-size:7.2px;letter-spacing:-0.252px;">Del</div>
<div class="t " style="left:85.1px;top:279.30px;font-size:7.2px;letter-spacing:-0.143px;">Expression actions</div>
<div class="t " style="left:85.1px;top:291.50px;font-size:7.2px;letter-spacing:-0.084px;">Link actions</div>
<div class="t " style="left:85.1px;top:304.30px;font-size:7.2px;letter-spacing:-0.027px;">Show hidden items</div>
<div class="t " style="left:85.1px;top:317.00px;font-size:7.2px;letter-spacing:0.061px;">Hide item</div>
<div class="t " style="left:85.1px;top:329.70px;font-size:7.2px;letter-spacing:0.055px;">Mark to recompute</div>
<div class="t " style="left:85.1px;top:342.10px;font-size:7.2px;letter-spacing:-0.022px;">Recompute object</div>
<div class="t " style="left:85.1px;top:354.70px;font-size:7.2px;letter-spacing:-0.360px;">Rename</div>
<div class="t " style="left:160.5px;top:354.70px;font-size:7.2px;letter-spacing:-0.360px;">F2</div>
<svg style="left:181.6px;top:282.59999999999997px" width="2.4" height="3.6" viewBox="0 0 2.4 3.6"><path d="M0 0L2.4 1.8L0 3.6Z" fill="#111"/></svg>
<svg style="left:181.6px;top:294.8px" width="2.4" height="3.6" viewBox="0 0 2.4 3.6"><path d="M0 0L2.4 1.8L0 3.6Z" fill="#111"/></svg>
<svg style="left:69.4px;top:194px" width="10" height="10" viewBox="0 0 10 10"><path d="M.6 .6H5V9.4H.6Z" fill="#3b3b3b"/><path d="M1.3 1.3H4.3V3.5H1.3Z" fill="#e23a2e"/><path d="M1.3 4H4.3V6.1H1.3Z" fill="#f0cf2b"/><path d="M1.3 6.6H4.3V8.7H1.3Z" fill="#3fae3a"/><path d="M5.6 6L7.4 5L9.4 5.8V8.2L7.6 9.4L5.6 8.6Z" fill="#2f66b0" stroke="#143a72" stroke-width=".4"/><path d="M5.6 6L7.4 5L9.4 5.8L7.6 6.8Z" fill="#79ace6"/></svg>
<svg style="left:69.2px;top:206.8px" width="11" height="11" viewBox="0 0 11 11"><circle cx="5.4" cy="3.6" r="3" fill="#7a3a96"/><circle cx="3.4" cy="7.2" r="3" fill="#6fb52c"/><circle cx="7.6" cy="7.2" r="3" fill="#e8741e"/><circle cx="4.6" cy="2.8" r="1" fill="#a774c2" opacity=".8"/></svg>
<svg style="left:70.2px;top:220.4px" width="9" height="10" viewBox="0 0 9 10"><path d="M2.8 .5L5.6 6.4M6.2 .5L3.4 6.4" stroke="#c4c4c4" stroke-width="1" fill="none"/><ellipse cx="2.4" cy="7.8" rx="1.5" ry="1.3" fill="none" stroke="#8f8f8f" stroke-width=".8"/><ellipse cx="6.6" cy="7.8" rx="1.5" ry="1.3" fill="none" stroke="#8f8f8f" stroke-width=".8"/></svg>
<svg style="left:69.8px;top:233.4px" width="10" height="10" viewBox="0 0 10 10"><path d="M.6 .6H6V6.8H.6Z" fill="#efefef" stroke="#d2d2d2" stroke-width=".5"/><path d="M3 2.6H9.2V9.4H3Z" fill="#f2f2f2" stroke="#c9c9c9" stroke-width=".5"/><path d="M4.2 4.4H8M4.2 5.6H8M4.2 6.8H7" stroke="#d0d0d0" stroke-width=".6"/></svg>
<svg style="left:70px;top:246px" width="9.6" height="10.4" viewBox="0 0 9.6 10.4"><path d="M.7 1.4H8.8V9.9H.7Z" fill="#a0a0a0" stroke="#8b8b8b" stroke-width=".5"/><path d="M1.8 2.5H7.7V8.8H1.8Z" fill="#efefef"/><path d="M3 .5H6.5V2.1H3Z" fill="#8c8c8c"/></svg>
<svg style="left:69.6px;top:265px" width="10.4" height="9.6" viewBox="0 0 10.4 9.6"><path d="M.6 2.2H9.8V8.6H.6Z" fill="#e4e4e4" stroke="#a9a9a9" stroke-width=".5"/><path d="M.4 .6H10V3.2H.4Z" fill="#2f62b5"/><path d="M.4 .6H10V1.4H.4Z" fill="#5f8fd8"/><path d="M1.4 7H9" stroke="#b9b9b9" stroke-width=".8"/></svg>
<svg style="left:0;top:0" width="200" height="220" viewBox="0 0 200 220"><rect x="23.5" y="151.3" width="50.8" height="15" fill="none" stroke="#f5822a" stroke-width="1.7"/><rect x="65.6" y="191.7" width="68.2" height="14.1" fill="none" stroke="#f5822a" stroke-width="1.7"/></svg>
</body></html>
